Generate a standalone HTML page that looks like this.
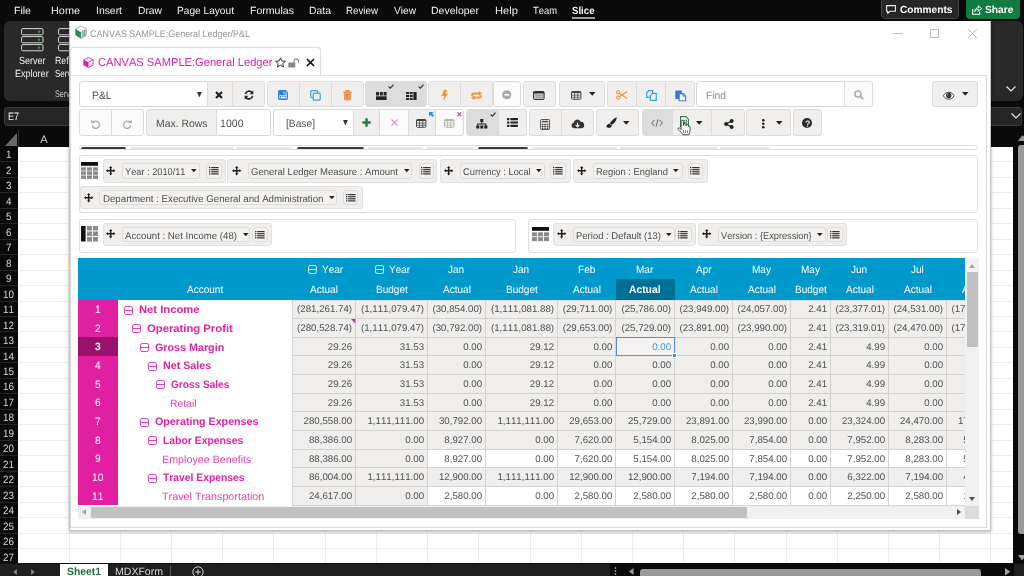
<!DOCTYPE html>
<html><head><meta charset="utf-8"><title>Slice - General Ledger P&amp;L</title>
<style>
html,body{margin:0;padding:0;}
body{width:1024px;height:576px;overflow:hidden;background:#0a0a0a;position:relative;font-family:"Liberation Sans",sans-serif;}
#root{position:absolute;left:0;top:0;width:1024px;height:576px;overflow:hidden;will-change:transform;filter:blur(0.35px);}
.b{position:absolute;box-sizing:border-box;}
.t{position:absolute;white-space:nowrap;font-family:"Liberation Sans",sans-serif;line-height:20px;transform-origin:0 50%;text-rendering:geometricPrecision;font-kerning:none;}
svg{overflow:visible;}
</style></head><body><div id="root">
<div class="b " style="left:18.00px;top:147.00px;width:995.00px;height:416.00px;background:#ffffff;"></div>
<div class="b " style="left:18.00px;top:161.00px;width:995.00px;height:1.00px;background:#ececec;"></div>
<div class="b " style="left:18.00px;top:177.00px;width:995.00px;height:1.00px;background:#ececec;"></div>
<div class="b " style="left:18.00px;top:192.00px;width:995.00px;height:1.00px;background:#ececec;"></div>
<div class="b " style="left:18.00px;top:208.00px;width:995.00px;height:1.00px;background:#ececec;"></div>
<div class="b " style="left:18.00px;top:223.00px;width:995.00px;height:1.00px;background:#ececec;"></div>
<div class="b " style="left:18.00px;top:239.00px;width:995.00px;height:1.00px;background:#ececec;"></div>
<div class="b " style="left:18.00px;top:254.00px;width:995.00px;height:1.00px;background:#ececec;"></div>
<div class="b " style="left:18.00px;top:270.00px;width:995.00px;height:1.00px;background:#ececec;"></div>
<div class="b " style="left:18.00px;top:285.00px;width:995.00px;height:1.00px;background:#ececec;"></div>
<div class="b " style="left:18.00px;top:301.00px;width:995.00px;height:1.00px;background:#ececec;"></div>
<div class="b " style="left:18.00px;top:316.00px;width:995.00px;height:1.00px;background:#ececec;"></div>
<div class="b " style="left:18.00px;top:331.00px;width:995.00px;height:1.00px;background:#ececec;"></div>
<div class="b " style="left:18.00px;top:347.00px;width:995.00px;height:1.00px;background:#ececec;"></div>
<div class="b " style="left:18.00px;top:362.00px;width:995.00px;height:1.00px;background:#ececec;"></div>
<div class="b " style="left:18.00px;top:378.00px;width:995.00px;height:1.00px;background:#ececec;"></div>
<div class="b " style="left:18.00px;top:393.00px;width:995.00px;height:1.00px;background:#ececec;"></div>
<div class="b " style="left:18.00px;top:409.00px;width:995.00px;height:1.00px;background:#ececec;"></div>
<div class="b " style="left:18.00px;top:424.00px;width:995.00px;height:1.00px;background:#ececec;"></div>
<div class="b " style="left:18.00px;top:440.00px;width:995.00px;height:1.00px;background:#ececec;"></div>
<div class="b " style="left:18.00px;top:455.00px;width:995.00px;height:1.00px;background:#ececec;"></div>
<div class="b " style="left:18.00px;top:471.00px;width:995.00px;height:1.00px;background:#ececec;"></div>
<div class="b " style="left:18.00px;top:486.00px;width:995.00px;height:1.00px;background:#ececec;"></div>
<div class="b " style="left:18.00px;top:502.00px;width:995.00px;height:1.00px;background:#ececec;"></div>
<div class="b " style="left:18.00px;top:517.00px;width:995.00px;height:1.00px;background:#ececec;"></div>
<div class="b " style="left:18.00px;top:533.00px;width:995.00px;height:1.00px;background:#ececec;"></div>
<div class="b " style="left:18.00px;top:548.00px;width:995.00px;height:1.00px;background:#ececec;"></div>
<div class="b " style="left:69.00px;top:147.00px;width:1.00px;height:416.00px;background:#ececec;"></div>
<div class="b " style="left:120.00px;top:147.00px;width:1.00px;height:416.00px;background:#ececec;"></div>
<div class="b " style="left:171.00px;top:147.00px;width:1.00px;height:416.00px;background:#ececec;"></div>
<div class="b " style="left:222.00px;top:147.00px;width:1.00px;height:416.00px;background:#ececec;"></div>
<div class="b " style="left:273.00px;top:147.00px;width:1.00px;height:416.00px;background:#ececec;"></div>
<div class="b " style="left:325.00px;top:147.00px;width:1.00px;height:416.00px;background:#ececec;"></div>
<div class="b " style="left:376.00px;top:147.00px;width:1.00px;height:416.00px;background:#ececec;"></div>
<div class="b " style="left:427.00px;top:147.00px;width:1.00px;height:416.00px;background:#ececec;"></div>
<div class="b " style="left:478.00px;top:147.00px;width:1.00px;height:416.00px;background:#ececec;"></div>
<div class="b " style="left:530.00px;top:147.00px;width:1.00px;height:416.00px;background:#ececec;"></div>
<div class="b " style="left:581.00px;top:147.00px;width:1.00px;height:416.00px;background:#ececec;"></div>
<div class="b " style="left:632.00px;top:147.00px;width:1.00px;height:416.00px;background:#ececec;"></div>
<div class="b " style="left:683.00px;top:147.00px;width:1.00px;height:416.00px;background:#ececec;"></div>
<div class="b " style="left:734.00px;top:147.00px;width:1.00px;height:416.00px;background:#ececec;"></div>
<div class="b " style="left:786.00px;top:147.00px;width:1.00px;height:416.00px;background:#ececec;"></div>
<div class="b " style="left:837.00px;top:147.00px;width:1.00px;height:416.00px;background:#ececec;"></div>
<div class="b " style="left:888.00px;top:147.00px;width:1.00px;height:416.00px;background:#ececec;"></div>
<div class="b " style="left:939.00px;top:147.00px;width:1.00px;height:416.00px;background:#ececec;"></div>
<div class="b " style="left:990.00px;top:147.00px;width:1.00px;height:416.00px;background:#ececec;"></div>
<div class="b " style="left:0.00px;top:128.00px;width:18.00px;height:435.00px;background:#0a0a0a;"></div>
<div class="b " style="left:0.00px;top:161.00px;width:18.00px;height:1.00px;background:#262626;"></div>
<div class="b " style="left:0.00px;top:177.00px;width:18.00px;height:1.00px;background:#262626;"></div>
<div class="b " style="left:0.00px;top:192.00px;width:18.00px;height:1.00px;background:#262626;"></div>
<div class="b " style="left:0.00px;top:208.00px;width:18.00px;height:1.00px;background:#262626;"></div>
<div class="b " style="left:0.00px;top:223.00px;width:18.00px;height:1.00px;background:#262626;"></div>
<div class="b " style="left:0.00px;top:239.00px;width:18.00px;height:1.00px;background:#262626;"></div>
<div class="b " style="left:0.00px;top:254.00px;width:18.00px;height:1.00px;background:#262626;"></div>
<div class="b " style="left:0.00px;top:270.00px;width:18.00px;height:1.00px;background:#262626;"></div>
<div class="b " style="left:0.00px;top:285.00px;width:18.00px;height:1.00px;background:#262626;"></div>
<div class="b " style="left:0.00px;top:301.00px;width:18.00px;height:1.00px;background:#262626;"></div>
<div class="b " style="left:0.00px;top:316.00px;width:18.00px;height:1.00px;background:#262626;"></div>
<div class="b " style="left:0.00px;top:331.00px;width:18.00px;height:1.00px;background:#262626;"></div>
<div class="b " style="left:0.00px;top:347.00px;width:18.00px;height:1.00px;background:#262626;"></div>
<div class="b " style="left:0.00px;top:362.00px;width:18.00px;height:1.00px;background:#262626;"></div>
<div class="b " style="left:0.00px;top:378.00px;width:18.00px;height:1.00px;background:#262626;"></div>
<div class="b " style="left:0.00px;top:393.00px;width:18.00px;height:1.00px;background:#262626;"></div>
<div class="b " style="left:0.00px;top:409.00px;width:18.00px;height:1.00px;background:#262626;"></div>
<div class="b " style="left:0.00px;top:424.00px;width:18.00px;height:1.00px;background:#262626;"></div>
<div class="b " style="left:0.00px;top:440.00px;width:18.00px;height:1.00px;background:#262626;"></div>
<div class="b " style="left:0.00px;top:455.00px;width:18.00px;height:1.00px;background:#262626;"></div>
<div class="b " style="left:0.00px;top:471.00px;width:18.00px;height:1.00px;background:#262626;"></div>
<div class="b " style="left:0.00px;top:486.00px;width:18.00px;height:1.00px;background:#262626;"></div>
<div class="b " style="left:0.00px;top:502.00px;width:18.00px;height:1.00px;background:#262626;"></div>
<div class="b " style="left:0.00px;top:517.00px;width:18.00px;height:1.00px;background:#262626;"></div>
<div class="b " style="left:0.00px;top:533.00px;width:18.00px;height:1.00px;background:#262626;"></div>
<div class="b " style="left:0.00px;top:548.00px;width:18.00px;height:1.00px;background:#262626;"></div>
<span class="t" style="left:5.56px;top:145px;font-size:10.6px;color:#d6d6d6;transform:scaleX(0.9300);">1</span>
<span class="t" style="left:5.56px;top:161px;font-size:10.6px;color:#d6d6d6;transform:scaleX(0.9300);">2</span>
<span class="t" style="left:5.56px;top:176px;font-size:10.6px;color:#d6d6d6;transform:scaleX(0.9300);">3</span>
<span class="t" style="left:5.56px;top:192px;font-size:10.6px;color:#d6d6d6;transform:scaleX(0.9300);">4</span>
<span class="t" style="left:5.56px;top:207px;font-size:10.6px;color:#d6d6d6;transform:scaleX(0.9300);">5</span>
<span class="t" style="left:5.56px;top:223px;font-size:10.6px;color:#d6d6d6;transform:scaleX(0.9300);">6</span>
<span class="t" style="left:5.56px;top:238px;font-size:10.6px;color:#d6d6d6;transform:scaleX(0.9300);">7</span>
<span class="t" style="left:5.56px;top:254px;font-size:10.6px;color:#d6d6d6;transform:scaleX(0.9300);">8</span>
<span class="t" style="left:5.56px;top:269px;font-size:10.6px;color:#d6d6d6;transform:scaleX(0.9300);">9</span>
<span class="t" style="left:2.82px;top:285px;font-size:10.6px;color:#d6d6d6;transform:scaleX(0.9300);">10</span>
<span class="t" style="left:2.82px;top:300px;font-size:10.6px;color:#d6d6d6;transform:scaleX(0.9300);">11</span>
<span class="t" style="left:2.82px;top:316px;font-size:10.6px;color:#d6d6d6;transform:scaleX(0.9300);">12</span>
<span class="t" style="left:2.82px;top:331px;font-size:10.6px;color:#d6d6d6;transform:scaleX(0.9300);">13</span>
<span class="t" style="left:2.82px;top:347px;font-size:10.6px;color:#d6d6d6;transform:scaleX(0.9300);">14</span>
<span class="t" style="left:2.82px;top:362px;font-size:10.6px;color:#d6d6d6;transform:scaleX(0.9300);">15</span>
<span class="t" style="left:2.82px;top:377px;font-size:10.6px;color:#d6d6d6;transform:scaleX(0.9300);">16</span>
<span class="t" style="left:2.82px;top:393px;font-size:10.6px;color:#d6d6d6;transform:scaleX(0.9300);">17</span>
<span class="t" style="left:2.82px;top:408px;font-size:10.6px;color:#d6d6d6;transform:scaleX(0.9300);">18</span>
<span class="t" style="left:2.82px;top:424px;font-size:10.6px;color:#d6d6d6;transform:scaleX(0.9300);">19</span>
<span class="t" style="left:2.82px;top:439px;font-size:10.6px;color:#d6d6d6;transform:scaleX(0.9300);">20</span>
<span class="t" style="left:2.82px;top:455px;font-size:10.6px;color:#d6d6d6;transform:scaleX(0.9300);">21</span>
<span class="t" style="left:2.82px;top:470px;font-size:10.6px;color:#d6d6d6;transform:scaleX(0.9300);">22</span>
<span class="t" style="left:2.82px;top:486px;font-size:10.6px;color:#d6d6d6;transform:scaleX(0.9300);">23</span>
<span class="t" style="left:2.82px;top:501px;font-size:10.6px;color:#d6d6d6;transform:scaleX(0.9300);">24</span>
<span class="t" style="left:2.82px;top:517px;font-size:10.6px;color:#d6d6d6;transform:scaleX(0.9300);">25</span>
<span class="t" style="left:2.82px;top:532px;font-size:10.6px;color:#d6d6d6;transform:scaleX(0.9300);">26</span>
<span class="t" style="left:2.82px;top:548px;font-size:10.6px;color:#d6d6d6;transform:scaleX(0.9300);">27</span>
<div class="b " style="left:0.00px;top:127.00px;width:1024.00px;height:20.00px;background:#0a0a0a;"></div>
<svg class="b" style="left:5.00px;top:133.00px;" width="12" height="13" viewBox="0 0 12 13"><path d="M12 0 L12 13 L0 13 Z" fill="#6a6a6a"/></svg>
<div class="b " style="left:18.00px;top:130.00px;width:1.00px;height:17.00px;background:#333;"></div>
<span class="t" style="left:40.33px;top:130px;font-size:11.0px;color:#d6d6d6;">A</span>
<div class="b " style="left:0.00px;top:0.00px;width:1024.00px;height:21.00px;background:#0a0a0a;"></div>
<span class="t" style="left:14.00px;top:2px;font-size:10.4px;color:#f2f2f2;transform:scaleX(1.0145);">File</span>
<span class="t" style="left:51.00px;top:2px;font-size:10.4px;color:#f2f2f2;transform:scaleX(1.0454);">Home</span>
<span class="t" style="left:96.00px;top:2px;font-size:10.4px;color:#f2f2f2;">Insert</span>
<span class="t" style="left:138.00px;top:2px;font-size:10.4px;color:#f2f2f2;transform:scaleX(0.9890);">Draw</span>
<span class="t" style="left:177.00px;top:2px;font-size:10.4px;color:#f2f2f2;transform:scaleX(0.9760);">Page Layout</span>
<span class="t" style="left:250.00px;top:2px;font-size:10.4px;color:#f2f2f2;transform:scaleX(1.0153);">Formulas</span>
<span class="t" style="left:309.00px;top:2px;font-size:10.4px;color:#f2f2f2;">Data</span>
<span class="t" style="left:346.00px;top:2px;font-size:10.4px;color:#f2f2f2;transform:scaleX(0.9384);">Review</span>
<span class="t" style="left:394.00px;top:2px;font-size:10.4px;color:#f2f2f2;transform:scaleX(0.9760);">View</span>
<span class="t" style="left:431.00px;top:2px;font-size:10.4px;color:#f2f2f2;transform:scaleX(1.0126);">Developer</span>
<span class="t" style="left:495.00px;top:2px;font-size:10.4px;color:#f2f2f2;transform:scaleX(1.0754);">Help</span>
<span class="t" style="left:533.00px;top:2px;font-size:10.4px;color:#f2f2f2;transform:scaleX(0.9029);">Team</span>
<span class="t" style="left:572.00px;top:2px;font-size:10.4px;color:#ffffff;font-weight:700;transform:scaleX(0.9266);">Slice</span>
<div class="b " style="left:572.00px;top:17.00px;width:22.50px;height:1.60px;background:#9a9a9a;"></div>
<div class="b " style="left:881.00px;top:-2.00px;width:78.00px;height:20.50px;background:#262626;border:1px solid #444;border-radius:4px;"></div>
<svg class="b" style="left:886.00px;top:4.50px;" width="10" height="9" viewBox="0 0 10 9"><path d="M0.6 0.6 H9.4 V6.2 H4 L1.8 8.4 V6.2 H0.6 Z" fill="none" stroke="#f0f0f0" stroke-width="1.1" stroke-linejoin="round"/></svg>
<span class="t" style="left:899.50px;top:1px;font-size:10.4px;color:#ffffff;font-weight:700;transform:scaleX(0.9769);">Comments</span>
<div class="b " style="left:966.00px;top:-2.00px;width:54.00px;height:20.50px;background:#107c41;border-radius:4px;"></div>
<svg class="b" style="left:972.00px;top:4.50px;" width="10" height="10" viewBox="0 0 10 10"><path d="M0.6 4 V9.2 H7.6 V6.6" fill="none" stroke="#fff" stroke-width="1.1"/><path d="M2.6 6.6 C2.8 4 4.4 2.8 6.4 2.8 V0.8 L9.6 3.6 L6.4 6.2 V4.4 C4.8 4.4 3.6 5 2.6 6.6 Z" fill="none" stroke="#fff" stroke-width="0.9" stroke-linejoin="round"/></svg>
<span class="t" style="left:985.00px;top:1px;font-size:10.4px;color:#ffffff;font-weight:700;transform:scaleX(0.9860);">Share</span>
<div class="b " style="left:4.00px;top:21.00px;width:1018.50px;height:79.50px;background:#292929;border-radius:6px;"></div>
<svg class="b" style="left:20.50px;top:28.00px;" width="23" height="24" viewBox="0 0 23 24"><rect x="0.6" y="0.6" width="21.4" height="6.2" rx="1.2" fill="none" stroke="#d8d8d8" stroke-width="1"/><path d="M17.2 2.2 l2.6 1.5 l-2.6 1.5 z" fill="#3fae5a"/><rect x="0.6" y="8.6" width="21.4" height="6.2" rx="1.2" fill="none" stroke="#d8d8d8" stroke-width="1"/><path d="M17.2 10.2 l2.6 1.5 l-2.6 1.5 z" fill="#3fae5a"/><rect x="0.6" y="16.6" width="21.4" height="6.2" rx="1.2" fill="none" stroke="#d8d8d8" stroke-width="1"/><path d="M17.2 18.2 l2.6 1.5 l-2.6 1.5 z" fill="#3fae5a"/></svg>
<svg class="b" style="left:57.50px;top:28.00px;" width="23" height="24" viewBox="0 0 23 24"><rect x="0.6" y="0.6" width="21.4" height="6.2" rx="1.2" fill="none" stroke="#d8d8d8" stroke-width="1"/><path d="M17.2 2.2 l2.6 1.5 l-2.6 1.5 z" fill="#3fae5a"/><rect x="0.6" y="8.6" width="21.4" height="6.2" rx="1.2" fill="none" stroke="#d8d8d8" stroke-width="1"/><path d="M17.2 10.2 l2.6 1.5 l-2.6 1.5 z" fill="#3fae5a"/><rect x="0.6" y="16.6" width="21.4" height="6.2" rx="1.2" fill="none" stroke="#d8d8d8" stroke-width="1"/><path d="M17.2 18.2 l2.6 1.5 l-2.6 1.5 z" fill="#3fae5a"/></svg>
<span class="t" style="left:18.98px;top:52px;font-size:10.4px;color:#f2f2f2;transform:scaleX(0.8700);">Server</span>
<span class="t" style="left:15.46px;top:65px;font-size:10.4px;color:#f2f2f2;transform:scaleX(0.8700);">Explorer</span>
<span class="t" style="left:54.50px;top:52px;font-size:10.4px;color:#f2f2f2;transform:scaleX(0.8455);">Refre</span>
<span class="t" style="left:55.00px;top:65px;font-size:10.4px;color:#f2f2f2;transform:scaleX(0.7730);">Serve</span>
<span class="t" style="left:54.80px;top:85px;font-size:9.6px;color:#c8c8c8;transform:scaleX(0.7498);">Server</span>
<svg class="b" style="left:1005.00px;top:85.00px;" width="12" height="8" viewBox="0 0 12 8"><path d="M1.5 1.5 L6 6 L10.5 1.5" fill="none" stroke="#e6e6e6" stroke-width="1.2"/></svg>
<div class="b " style="left:0.00px;top:100.50px;width:1024.00px;height:27.50px;background:#0a0a0a;"></div>
<div class="b " style="left:4.00px;top:107.00px;width:196.00px;height:19.00px;background:#262626;border:1px solid #3c3c3c;border-radius:3px;"></div>
<span class="t" style="left:8.00px;top:107px;font-size:10.8px;color:#f2f2f2;transform:scaleX(0.8327);">E7</span>
<div class="b " style="left:900.00px;top:107.00px;width:122.00px;height:19.00px;background:#262626;border:1px solid #3c3c3c;border-radius:3px;"></div>
<svg class="b" style="left:1010.00px;top:112.00px;" width="12" height="8" viewBox="0 0 12 8"><path d="M1.5 1.5 L6 6 L10.5 1.5" fill="none" stroke="#e6e6e6" stroke-width="1.2"/></svg>
<div class="b " style="left:1013.00px;top:128.00px;width:11.00px;height:435.00px;background:#0a0a0a;"></div>
<div class="b " style="left:1018.00px;top:145.00px;width:9.00px;height:389.00px;background:#999999;border-radius:3px;"></div>
<svg class="b" style="left:1017.50px;top:134.50px;" width="8" height="6" viewBox="0 0 8 6"><path d="M0 6 L4.5 0 L9 6 Z" fill="#9a9a9a"/></svg>
<svg class="b" style="left:1018.00px;top:555.00px;" width="8" height="5.5" viewBox="0 0 8 5.5"><path d="M0 0 L4 5.5 L8 0 Z" fill="#a0a0a0"/></svg>
<div class="b " style="left:0.00px;top:563.00px;width:1024.00px;height:13.00px;background:#1f1f1f;"></div>
<div class="b " style="left:0.00px;top:563.00px;width:1024.00px;height:1.00px;background:#111;"></div>
<svg class="b" style="left:13.30px;top:569.00px;" width="4" height="6" viewBox="0 0 4 6"><path d="M3.8 0 L0.2 3 L3.8 6 Z" fill="#8a8a8a"/></svg>
<svg class="b" style="left:30.80px;top:569.00px;" width="4" height="6" viewBox="0 0 4 6"><path d="M0.2 0 L3.8 3 L0.2 6 Z" fill="#8a8a8a"/></svg>
<div class="b " style="left:60.00px;top:564.00px;width:48.00px;height:12.00px;background:#ffffff;"></div>
<span class="t" style="left:66.50px;top:562px;font-size:10.6px;color:#1e7145;font-weight:700;transform:scaleX(0.9782);">Sheet1</span>
<span class="t" style="left:115.00px;top:562px;font-size:10.6px;color:#d6d6d6;transform:scaleX(0.9941);">MDXForm</span>
<div class="b " style="left:170.00px;top:565.50px;width:1.00px;height:10.50px;background:#555;"></div>
<svg class="b" style="left:192.00px;top:565.80px;" width="12" height="12" viewBox="0 0 12 12"><circle cx="6" cy="6" r="5.2" fill="none" stroke="#d0d0d0" stroke-width="1"/><path d="M3.2 6 H8.8 M6 3.2 V8.8" stroke="#d0d0d0" stroke-width="1.1"/></svg>
<div class="b " style="left:610.00px;top:563.40px;width:403.50px;height:12.60px;background:#0a0a0a;"></div>
<svg class="b" style="left:613.50px;top:567.00px;" width="3" height="9" viewBox="0 0 3 9"><circle cx="1.5" cy="1" r="0.8" fill="#ccc"/><circle cx="1.5" cy="4" r="0.8" fill="#ccc"/><circle cx="1.5" cy="7" r="0.8" fill="#ccc"/></svg>
<svg class="b" style="left:629.00px;top:567.50px;" width="5" height="7" viewBox="0 0 5 7"><path d="M4.5 0 L0 3.5 L4.5 7 Z" fill="#9a9a9a"/></svg>
<div class="b " style="left:639.50px;top:568.70px;width:341.50px;height:10.30px;background:#999999;border-radius:3px;"></div>
<svg class="b" style="left:1004.80px;top:568.20px;" width="5.4" height="7.6" viewBox="0 0 5.4 7.6"><path d="M0 0 L5.4 3.8 L0 7.6 Z" fill="#a0a0a0"/></svg>
<div class="b " style="left:1013.50px;top:564.60px;width:10.50px;height:11.40px;background:#1f1f1f;"></div>
<div class="b " style="left:68.60px;top:21.00px;width:922.70px;height:509.80px;background:#ffffff;box-shadow:0 1px 3px rgba(0,0,0,0.30);border:1px solid #c4c4c4;border-top:none;"></div>
<svg class="b" style="left:75.00px;top:25.40px;" width="12" height="13.6" viewBox="0 0 12 13.6"><path d="M0.5 4 L6 1 L11.5 4 V10 L6 13.5 L0.5 10 Z" fill="#fff" stroke="#8a9a90" stroke-width="0.7"/><path d="M0.5 4 L6 7.2 V13.5 L0.5 10 Z" fill="#2e8b57"/><path d="M6 7.2 L11.5 4 V10 L6 13.5 Z" fill="#e8efe9" stroke="#8a9a90" stroke-width="0.5"/><path d="M8 6 V12.2 M9.8 5 V11.2" stroke="#4a7a68" stroke-width="0.9"/></svg>
<span class="t" style="left:90.00px;top:25px;font-size:9.6px;color:#949494;transform:scaleX(0.9341);">CANVAS SAMPLE:General Ledger/P&amp;L</span>
<div class="b " style="left:893.00px;top:32.60px;width:9.50px;height:1.00px;background:#bcbcbc;"></div>
<div class="b " style="left:930.00px;top:28.50px;width:9.00px;height:9.00px;border:1px solid #bababa;"></div>
<svg class="b" style="left:968.00px;top:28.50px;" width="9" height="9" viewBox="0 0 9 9"><path d="M0.3 0.3 L8.7 8.7 M8.7 0.3 L0.3 8.7" stroke="#b4b4b4" stroke-width="1"/></svg>
<div class="b " style="left:70.00px;top:75.00px;width:917.00px;height:453.00px;background:#fff;border:1px solid #dcdcdc;"></div>
<div class="b " style="left:70.00px;top:47.00px;width:250.50px;height:29.00px;background:#fff;border:1px solid #dcdcdc;border-radius:3px 3px 0 0;border-bottom:none;"></div>
<svg class="b" style="left:83.00px;top:56.70px;" width="11" height="11" viewBox="0 0 11.5 12.5"><path d="M5.75 0.5 L11 3.2 V9.2 L5.75 12 L0.5 9.2 V3.2 Z" fill="none" stroke="#e01fa2" stroke-width="1"/><path d="M0.5 3.2 L5.75 6 V12 L0.5 9.2 Z" fill="#e01fa2"/><path d="M5.75 6 L11 3.2" stroke="#e01fa2" stroke-width="1"/></svg>
<span class="t" style="left:97.50px;top:53px;font-size:11.6px;color:#e01fa2;transform:scaleX(0.9598);">CANVAS SAMPLE:General Ledger</span>
<div class="b " style="left:71.00px;top:75.00px;width:249.00px;height:1.00px;background:#e6e6e6;"></div>
<svg class="b" style="left:275.00px;top:56.50px;" width="11" height="11" viewBox="0 0 11 11"><path d="M5.5 0.8 L6.9 4 L10.4 4.3 L7.7 6.6 L8.6 10 L5.5 8.1 L2.4 10 L3.3 6.6 L0.6 4.3 L4.1 4 Z" fill="none" stroke="#222" stroke-width="0.9" stroke-linejoin="round"/></svg>
<svg class="b" style="left:288.00px;top:57.50px;" width="12" height="10" viewBox="0 0 12 10"><rect x="0.3" y="4.6" width="7" height="5" rx="0.8" fill="#888"/><path d="M6 4.6 V3 a2.2 2.2 0 0 1 4.4 0 V4.4" fill="none" stroke="#888" stroke-width="1.2"/></svg>
<svg class="b" style="left:305.50px;top:57.50px;" width="9" height="9" viewBox="0 0 9 9"><path d="M1 1 L8 8 M8 1 L1 8" stroke="#111" stroke-width="1.7"/></svg>
<div class="b " style="left:79.00px;top:81.00px;width:129.00px;height:26.00px;background:#fff;border:1px solid #d6d6d6;border-radius:3px 0px 0px 3px;"></div>
<span class="t" style="left:91.50px;top:86px;font-size:10.8px;color:#505050;transform:scaleX(0.9601);">P&amp;L</span>
<svg class="b" style="left:196.60px;top:92.25px;" width="4.8" height="5.5" viewBox="0 0 4.8 5.5"><path d="M0 0 H4.8 L2.4 5.5 Z" fill="#333"/></svg>
<div class="b " style="left:207.00px;top:81.00px;width:26.00px;height:26.00px;background:#f0efee;border:1px solid #dddcdb;border-radius:0px 0px 0px 0px;"></div>
<svg class="b" style="left:215.30px;top:91.20px;" width="8" height="8" viewBox="0 0 8 8"><path d="M1 1 L7 7 M7 1 L1 7" stroke="#222" stroke-width="2.2"/></svg>
<div class="b " style="left:232.00px;top:81.00px;width:33.00px;height:26.00px;background:#f0efee;border:1px solid #dddcdb;border-radius:0px 3px 3px 0px;"></div>
<svg class="b" style="left:243.50px;top:90.00px;" width="10" height="10" viewBox="0 0 10 10"><path d="M1.3 4.2 A3.9 3.9 0 0 1 8 2.4" fill="none" stroke="#222" stroke-width="1.6"/><path d="M9.3 0.6 V4.3 H5.6 Z" fill="#222"/><path d="M8.7 5.8 A3.9 3.9 0 0 1 2 7.6" fill="none" stroke="#222" stroke-width="1.6"/><path d="M0.7 9.4 V5.7 H4.4 Z" fill="#222"/></svg>
<div class="b " style="left:267.00px;top:81.00px;width:33.00px;height:26.00px;background:#f0efee;border:1px solid #dddcdb;border-radius:3px 0px 0px 3px;"></div>
<svg class="b" style="left:278.00px;top:90.00px;" width="10" height="10" viewBox="0 0 10 10"><path d="M0.7 1.5 a0.8 0.8 0 0 1 0.8 -0.8 H7.4 L9.3 2.6 V8.5 a0.8 0.8 0 0 1 -0.8 0.8 H1.5 a0.8 0.8 0 0 1 -0.8 -0.8 Z" fill="none" stroke="#2b7de1" stroke-width="1.3"/><rect x="1.2" y="1" width="6.4" height="4.2" fill="#2b7de1"/><rect x="5.2" y="1.4" width="1.3" height="2.4" fill="#9cc6f5"/><rect x="2.6" y="6.4" width="4.8" height="2.2" fill="#fff" stroke="#2b7de1" stroke-width="0.6"/></svg>
<div class="b " style="left:299.00px;top:81.00px;width:33.00px;height:26.00px;background:#f0efee;border:1px solid #dddcdb;border-radius:0px 0px 0px 0px;"></div>
<svg class="b" style="left:309.50px;top:89.50px;" width="11" height="11" viewBox="0 0 11 11"><rect x="0.7" y="0.7" width="7" height="7" rx="1" fill="none" stroke="#38a3d8" stroke-width="1.2"/><rect x="3.2" y="3.2" width="7" height="7" rx="1" fill="#f0efee" stroke="#38a3d8" stroke-width="1.2"/></svg>
<div class="b " style="left:331.00px;top:81.00px;width:33.00px;height:26.00px;background:#f0efee;border:1px solid #dddcdb;border-radius:0px 3px 3px 0px;"></div>
<svg class="b" style="left:342.50px;top:89.75px;" width="9" height="10.5" viewBox="0 0 9 10.5"><path d="M0.3 2.1 H8.7 M3 1.8 V0.6 H6 V1.8" fill="none" stroke="#f0883c" stroke-width="1.1"/><path d="M1.2 2.6 H7.8 L7.3 10 H1.7 Z" fill="#f6a76b" stroke="#f0883c" stroke-width="0.8"/><path d="M3.2 4 V8.6 M4.5 4 V8.6 M5.8 4 V8.6" stroke="#e8733a" stroke-width="0.7"/></svg>
<div class="b " style="left:365.00px;top:81.00px;width:62.00px;height:26.00px;background:#dcdcdc;border-radius:3px;"></div>
<svg class="b" style="left:375.70px;top:91.90px;" width="10.6" height="8" viewBox="0 0 10.6 8"><rect x="0" y="0" width="3" height="3.5" fill="#2a2a2a"/><rect x="3.8" y="0" width="3" height="3.5" fill="#2a2a2a"/><rect x="7.6" y="0" width="3" height="3.5" fill="#2a2a2a"/><rect x="0" y="4.3" width="10.6" height="3.7" fill="#222"/></svg>
<svg class="b" style="left:388.00px;top:83.50px;" width="6" height="5" viewBox="0 0 6 5"><path d="M0.6 2.6 L2.3 4.2 L5.5 0.6" fill="none" stroke="#333" stroke-width="1.2"/></svg>
<svg class="b" style="left:405.80px;top:91.90px;" width="10.6" height="8" viewBox="0 0 10.6 8"><rect x="0" y="0" width="3" height="2.1" fill="#2a2a2a"/><rect x="3.7" y="0" width="3" height="2.1" fill="#2a2a2a"/><rect x="0" y="2.95" width="3" height="2.1" fill="#2a2a2a"/><rect x="3.7" y="2.95" width="3" height="2.1" fill="#2a2a2a"/><rect x="0" y="5.9" width="3" height="2.1" fill="#2a2a2a"/><rect x="3.7" y="5.9" width="3" height="2.1" fill="#2a2a2a"/><rect x="7.4" y="0" width="3.2" height="8" fill="#222"/></svg>
<svg class="b" style="left:418.00px;top:83.50px;" width="6" height="5" viewBox="0 0 6 5"><path d="M0.6 2.6 L2.3 4.2 L5.5 0.6" fill="none" stroke="#333" stroke-width="1.2"/></svg>
<div class="b " style="left:428.00px;top:81.00px;width:33.00px;height:26.00px;background:#f0efee;border:1px solid #dddcdb;border-radius:3px 0px 0px 3px;"></div>
<svg class="b" style="left:441.00px;top:89.50px;" width="7" height="11" viewBox="0 0 7 11"><path d="M3 0 H6.2 L4.6 3.8 H7 L2.2 11 L3.2 6 H0.4 Z" fill="#f0953a"/></svg>
<div class="b " style="left:460.00px;top:81.00px;width:33.00px;height:26.00px;background:#f0efee;border:1px solid #dddcdb;border-radius:0px 3px 3px 0px;"></div>
<svg class="b" style="left:470.00px;top:91.30px;" width="13" height="9" viewBox="0 0 13 9"><path d="M2.2 4.8 V3.6 a1.2 1.2 0 0 1 1.2 -1.2 H9.2" fill="none" stroke="#f0953a" stroke-width="2"/><path d="M8.6 0 L12.2 2.4 L8.6 4.8 Z" fill="#f0953a"/><path d="M10.8 4.2 V5.4 a1.2 1.2 0 0 1 -1.2 1.2 H3.8" fill="none" stroke="#f0953a" stroke-width="2"/><path d="M4.4 4.2 L0.8 6.6 L4.4 9 Z" fill="#f0953a"/></svg>
<div class="b " style="left:493.00px;top:81.00px;width:28.00px;height:26.00px;background:#fbfbfb;border:1px solid #d9d9d9;border-radius:3px 3px 3px 3px;"></div>
<svg class="b" style="left:502.25px;top:90.25px;" width="9.5" height="9.5" viewBox="0 0 9.5 9.5"><circle cx="4.75" cy="4.75" r="4.6" fill="#a9a9a9"/><rect x="2.3" y="4" width="4.9" height="1.6" fill="#fbfbfb"/></svg>
<div class="b " style="left:523.00px;top:81.00px;width:33.00px;height:26.00px;background:#f0efee;border:1px solid #dddcdb;border-radius:3px 3px 3px 3px;"></div>
<svg class="b" style="left:533.40px;top:90.80px;" width="11.6" height="9" viewBox="0 0 11.6 9"><rect x="0.5" y="0.5" width="10.6" height="8" rx="1" fill="#c4c4c4" stroke="#333" stroke-width="1"/><rect x="0.5" y="0.5" width="10.6" height="2" fill="#333"/><path d="M2.2 4.6 H9.4 M2.2 6.4 H9.4" stroke="#8a8a8a" stroke-width="0.7"/></svg>
<div class="b " style="left:559.00px;top:81.00px;width:46.00px;height:26.00px;background:#f0efee;border:1px solid #dddcdb;border-radius:3px 3px 3px 3px;"></div>
<svg class="b" style="left:570.60px;top:90.90px;" width="10.4" height="8.8" viewBox="0 0 10.4 8.8"><rect x="0.5" y="0.5" width="9.4" height="7.8" rx="1" fill="#fdfdfd" stroke="#444" stroke-width="1"/><rect x="0.5" y="0.5" width="9.4" height="1.6" fill="#444"/><path d="M0.5 4.1 H9.9 M0.5 6.2 H9.9 M3.56667 1.6 V8.3 M6.83333 1.6 V8.3" stroke="#444" stroke-width="0.8" fill="none"/></svg>
<svg class="b" style="left:588.75px;top:92.10px;" width="6.5" height="3.8" viewBox="0 0 6.5 3.8"><path d="M0 0 H6.5 L3.25 3.8 Z" fill="#222"/></svg>
<div class="b " style="left:607.00px;top:81.00px;width:30.00px;height:26.00px;background:#f0efee;border:1px solid #dddcdb;border-radius:3px 0px 0px 3px;"></div>
<svg class="b" style="left:616.00px;top:90.00px;" width="12" height="10" viewBox="0 0 12 10"><circle cx="2.2" cy="2.3" r="1.6" fill="none" stroke="#f0953a" stroke-width="1.1"/><circle cx="2.2" cy="7.7" r="1.6" fill="none" stroke="#f0953a" stroke-width="1.1"/><path d="M3.4 3.3 L11.2 8.6 M3.4 6.7 L11.2 1.4" stroke="#f0953a" stroke-width="1.2" fill="none"/></svg>
<div class="b " style="left:636.00px;top:81.00px;width:30.00px;height:26.00px;background:#f0efee;border:1px solid #dddcdb;border-radius:0px 0px 0px 0px;"></div>
<svg class="b" style="left:645.50px;top:89.50px;" width="11" height="11" viewBox="0 0 11 11"><path d="M0.7 3 L2.8 0.7 H6.6 V7.4 H0.7 Z" fill="none" stroke="#38a3d8" stroke-width="1.2"/><path d="M4.3 5.6 L6.4 3.4 H10.3 V10.3 H4.3 Z" fill="#f0efee" stroke="#38a3d8" stroke-width="1.2"/></svg>
<div class="b " style="left:665.00px;top:81.00px;width:30.00px;height:26.00px;background:#f0efee;border:1px solid #dddcdb;border-radius:0px 3px 3px 0px;"></div>
<svg class="b" style="left:674.50px;top:89.50px;" width="11" height="11" viewBox="0 0 11 11"><rect x="0.3" y="0.6" width="6.6" height="8.4" rx="0.8" fill="#2b7de1"/><path d="M4.2 3.6 H8.2 L10.6 6 V10.7 H4.2 Z" fill="#fff" stroke="#2b7de1" stroke-width="1.1"/><path d="M8 3.6 V6.2 H10.6" fill="none" stroke="#2b7de1" stroke-width="0.9"/></svg>
<div class="b " style="left:696.00px;top:81.00px;width:149.00px;height:26.00px;background:#fff;border:1px solid #d6d6d6;border-radius:3px 0px 0px 3px;"></div>
<span class="t" style="left:706.00px;top:86px;font-size:10.6px;color:#8a8a8a;transform:scaleX(0.9700);">Find</span>
<div class="b " style="left:844.00px;top:81.00px;width:29.00px;height:26.00px;background:#fbfbfb;border:1px solid #dcdcdc;border-radius:0px 3px 3px 0px;"></div>
<svg class="b" style="left:853.50px;top:90.30px;" width="10" height="10" viewBox="0 0 10 10"><circle cx="4" cy="4" r="3.1" fill="none" stroke="#aaa" stroke-width="1.5"/><path d="M6.3 6.3 L9.3 9.3" stroke="#aaa" stroke-width="1.8"/></svg>
<div class="b " style="left:932.00px;top:81.00px;width:46.00px;height:26.00px;background:#f0efee;border:1px solid #dddcdb;border-radius:3px 3px 3px 3px;"></div>
<svg class="b" style="left:942.75px;top:92.25px;" width="11.5" height="7.5" viewBox="0 0 11.5 7.5"><path d="M0.4 3.75 C2 0.9 3.8 0.3 5.75 0.3 C7.7 0.3 9.5 0.9 11.1 3.75 C9.5 6.6 7.7 7.2 5.75 7.2 C3.8 7.2 2 6.6 0.4 3.75 Z" fill="#fff" stroke="#333" stroke-width="0.9"/><circle cx="5.75" cy="3.5" r="2.7" fill="#333"/><circle cx="4.8" cy="2.6" r="0.9" fill="#777"/></svg>
<svg class="b" style="left:961.75px;top:91.60px;" width="6.5" height="3.8" viewBox="0 0 6.5 3.8"><path d="M0 0 H6.5 L3.25 3.8 Z" fill="#222"/></svg>
<div class="b " style="left:79.00px;top:109.00px;width:33.00px;height:27.00px;background:#fbfbfb;border:1px solid #dcdcdc;border-radius:3px 0px 0px 3px;"></div>
<svg class="b" style="left:90.50px;top:118.55px;" width="9" height="9.5" viewBox="0 0 9 9.5"><path d="M2 3.4 A3.6 3.6 0 1 1 1.2 6.4" fill="none" stroke="#a8a8a8" stroke-width="1.3"/><path d="M0.3 0.6 V4.2 H3.9 Z" fill="#a8a8a8"/></svg>
<div class="b " style="left:111.00px;top:109.00px;width:33.00px;height:27.00px;background:#fbfbfb;border:1px solid #dcdcdc;border-radius:0px 3px 3px 0px;"></div>
<svg class="b" style="left:123.00px;top:118.55px;" width="9" height="9.5" viewBox="0 0 9 9.5"><path d="M7 3.4 A3.6 3.6 0 1 0 7.8 6.4" fill="none" stroke="#a8a8a8" stroke-width="1.3"/><path d="M8.7 0.6 V4.2 H5.1 Z" fill="#a8a8a8"/></svg>
<div class="b " style="left:146.00px;top:109.00px;width:71.00px;height:27.00px;background:#f0efee;border:1px solid #dddcdb;border-radius:3px 0px 0px 3px;"></div>
<span class="t" style="left:155.50px;top:114px;font-size:10.6px;color:#505050;transform:scaleX(0.9825);">Max. Rows</span>
<div class="b " style="left:216.00px;top:109.00px;width:55.00px;height:27.00px;background:#fff;border:1px solid #d6d6d6;border-radius:0px 3px 3px 0px;"></div>
<span class="t" style="left:220.00px;top:114px;font-size:10.6px;color:#505050;">1000</span>
<div class="b " style="left:273.00px;top:109.00px;width:81.00px;height:27.00px;background:#fff;border:1px solid #d6d6d6;border-radius:3px 0px 0px 3px;"></div>
<span class="t" style="left:285.50px;top:114px;font-size:10.6px;color:#505050;transform:scaleX(0.9651);">[Base]</span>
<svg class="b" style="left:343.10px;top:120.05px;" width="4.8" height="5.5" viewBox="0 0 4.8 5.5"><path d="M0 0 H4.8 L2.4 5.5 Z" fill="#333"/></svg>
<div class="b " style="left:353.00px;top:109.00px;width:27.00px;height:27.00px;background:#f0efee;border:1px solid #dddcdb;border-radius:0px 0px 0px 0px;"></div>
<svg class="b" style="left:362.00px;top:118.30px;" width="9" height="9" viewBox="0 0 9 9"><path d="M4.5 0.3 V8.7 M0.3 4.5 H8.7" stroke="#1f7a3e" stroke-width="2.4"/></svg>
<div class="b " style="left:379.00px;top:109.00px;width:30.00px;height:27.00px;background:#fbfbfb;border:1px solid #d9d9d9;border-radius:0px 0px 0px 0px;"></div>
<svg class="b" style="left:390.50px;top:119.30px;" width="7" height="7" viewBox="0 0 7 7"><path d="M0.5 0.5 L6.5 6.5 M6.5 0.5 L0.5 6.5" stroke="#eb8ed0" stroke-width="1.1"/></svg>
<div class="b " style="left:408.00px;top:109.00px;width:28.00px;height:27.00px;background:#f0efee;border:1px solid #dddcdb;border-radius:0px 0px 0px 0px;"></div>
<svg class="b" style="left:416.40px;top:118.80px;" width="10.4" height="8.8" viewBox="0 0 10.4 8.8"><rect x="0.5" y="0.5" width="9.4" height="7.8" rx="1" fill="#fdfdfd" stroke="#444" stroke-width="1"/><rect x="0.5" y="0.5" width="9.4" height="1.6" fill="#444"/><path d="M0.5 4.1 H9.9 M0.5 6.2 H9.9 M3.56667 1.6 V8.3 M6.83333 1.6 V8.3" stroke="#444" stroke-width="0.8" fill="none"/></svg>
<svg class="b" style="left:429.00px;top:112.00px;" width="5" height="5" viewBox="0 0 5 5"><path d="M0 0 H4.6 L3.1 1.5 L5 3.4 L3.4 5 L1.5 3.1 L0 4.6 Z" fill="#2b8be8"/></svg>
<div class="b " style="left:435.00px;top:109.00px;width:29.00px;height:27.00px;background:#fbfbfb;border:1px solid #d9d9d9;border-radius:0px 3px 3px 0px;"></div>
<svg class="b" style="left:444.40px;top:118.80px;" width="10.4" height="8.8" viewBox="0 0 10.4 8.8"><rect x="0.5" y="0.5" width="9.4" height="7.8" rx="1" fill="#fdfdfd" stroke="#b4b4b4" stroke-width="1"/><rect x="0.5" y="0.5" width="9.4" height="1.6" fill="#b4b4b4"/><path d="M0.5 4.1 H9.9 M0.5 6.2 H9.9 M3.56667 1.6 V8.3 M6.83333 1.6 V8.3" stroke="#b4b4b4" stroke-width="0.8" fill="none"/></svg>
<svg class="b" style="left:456.70px;top:112.20px;" width="4.6" height="4.6" viewBox="0 0 4.6 4.6"><path d="M0.4 0.4 L4.2 4.2 M4.2 0.4 L0.4 4.2" stroke="#e0399f" stroke-width="1.2"/></svg>
<div class="b " style="left:466.00px;top:109.00px;width:33.00px;height:27.00px;background:#dcdcdc;border-radius:3px 0 0 3px;"></div>
<svg class="b" style="left:476.20px;top:119.40px;" width="11.6" height="9.6" viewBox="0 0 11 9.5"><rect x="4" y="0" width="3" height="3" fill="#222"/><path d="M5.5 3 V5 M1.5 6.6 V5 H9.5 V6.6" fill="none" stroke="#222" stroke-width="1"/><rect x="0" y="6.4" width="3" height="3" fill="#222"/><rect x="4" y="6.4" width="3" height="3" fill="#222"/><rect x="8" y="6.4" width="3" height="3" fill="#222"/></svg>
<svg class="b" style="left:489.50px;top:112.00px;" width="6" height="5" viewBox="0 0 6 5"><path d="M0.6 2.6 L2.3 4.2 L5.5 0.6" fill="none" stroke="#333" stroke-width="1.2"/></svg>
<div class="b " style="left:498.00px;top:109.00px;width:29.00px;height:27.00px;background:#f0efee;border:1px solid #dddcdb;border-radius:0px 3px 3px 0px;"></div>
<svg class="b" style="left:507.10px;top:118.00px;" width="11" height="9" viewBox="0 0 11 9"><rect x="0" y="0" width="2.4" height="2.2" rx="0.4" fill="#222"/><rect x="3.4" y="0" width="7.6" height="2.2" rx="0.4" fill="#222"/><rect x="0" y="3.4" width="2.4" height="2.2" rx="0.4" fill="#222"/><rect x="3.4" y="3.4" width="7.6" height="2.2" rx="0.4" fill="#222"/><rect x="0" y="6.8" width="2.4" height="2.2" rx="0.4" fill="#222"/><rect x="3.4" y="6.8" width="7.6" height="2.2" rx="0.4" fill="#222"/></svg>
<div class="b " style="left:529.00px;top:109.00px;width:33.00px;height:27.00px;background:#f0efee;border:1px solid #dddcdb;border-radius:3px 0px 0px 3px;"></div>
<svg class="b" style="left:539.80px;top:118.70px;" width="10.2" height="11" viewBox="0 0 10 11"><rect x="0.5" y="0.5" width="9" height="10" rx="0.8" fill="none" stroke="#444" stroke-width="0.9"/><rect x="1.8" y="1.8" width="6.4" height="1.6" fill="#555"/><rect x="1.8" y="4.8" width="1.5" height="1.3" fill="#333"/><rect x="4.25" y="4.8" width="1.5" height="1.3" fill="#333"/><rect x="6.7" y="4.8" width="1.5" height="1.3" fill="#333"/><rect x="1.8" y="6.7" width="1.5" height="1.3" fill="#333"/><rect x="4.25" y="6.7" width="1.5" height="1.3" fill="#333"/><rect x="6.7" y="6.7" width="1.5" height="1.3" fill="#333"/><rect x="1.8" y="8.6" width="1.5" height="1.3" fill="#333"/><rect x="4.25" y="8.6" width="1.5" height="1.3" fill="#333"/><rect x="6.7" y="8.6" width="1.5" height="1.3" fill="#333"/></svg>
<div class="b " style="left:561.00px;top:109.00px;width:33.00px;height:27.00px;background:#f0efee;border:1px solid #dddcdb;border-radius:0px 3px 3px 0px;"></div>
<svg class="b" style="left:571.00px;top:118.55px;" width="13" height="9.5" viewBox="0 0 13 9.5"><path d="M3 9.3 a2.8 2.8 0 0 1 -0.4 -5.5 a3.6 3.6 0 0 1 6.9 -1 a3.2 3.2 0 0 1 0.8 6.5 Z" fill="#333"/><path d="M6.5 3.6 V7.6 M4.6 5.9 L6.5 7.9 L8.4 5.9" fill="none" stroke="#f0efee" stroke-width="1.2"/></svg>
<div class="b " style="left:596.00px;top:109.00px;width:43.00px;height:27.00px;background:#f0efee;border:1px solid #dddcdb;border-radius:3px 3px 3px 3px;"></div>
<svg class="b" style="left:605.60px;top:117.40px;" width="11.2" height="11.2" viewBox="0 0 10.5 10.5"><path d="M10.2 0.2 C7.6 1.2 5 3.6 3.6 5.8 L5.4 7.6 C7.8 6 10 3 10.2 0.2 Z" fill="#222"/><path d="M3.2 6.3 C1.2 6 1.4 8.2 0 8.8 C1.8 10.8 5.4 10.4 5.4 7.9 Z" fill="#222"/></svg>
<svg class="b" style="left:622.75px;top:121.10px;" width="6.5" height="3.8" viewBox="0 0 6.5 3.8"><path d="M0 0 H6.5 L3.25 3.8 Z" fill="#222"/></svg>
<div class="b " style="left:642.00px;top:109.00px;width:30.00px;height:27.00px;background:#dcdcdc;border-radius:3px 0 0 3px;"></div>
<svg class="b" style="left:651.00px;top:119.30px;" width="12" height="8" viewBox="0 0 12 8"><path d="M3.4 1 L0.7 4 L3.4 7 M8.6 1 L11.3 4 L8.6 7 M6.9 0.4 L5.1 7.6" fill="none" stroke="#666" stroke-width="1"/></svg>
<div class="b " style="left:672.00px;top:109.00px;width:40.00px;height:27.00px;background:#f0efee;border:1px solid #dddcdb;border-radius:0px 0px 0px 0px;"></div>
<svg class="b" style="left:680.00px;top:116.00px;" width="9" height="11" viewBox="0 0 9 11"><path d="M0.6 0.6 H5.8 L8.4 3.2 V10.4 H0.6 Z" fill="#fff" stroke="#2e7d4f" stroke-width="1.1"/><path d="M2.2 4.2 H6.6 V8.6 H2.2 Z M2.2 6.4 H6.6 M4.4 4.2 V8.6" fill="none" stroke="#2e7d4f" stroke-width="0.8"/></svg>
<svg class="b" style="left:696.25px;top:121.10px;" width="6.5" height="3.8" viewBox="0 0 6.5 3.8"><path d="M0 0 H6.5 L3.25 3.8 Z" fill="#222"/></svg>
<div class="b " style="left:711.00px;top:109.00px;width:34.00px;height:27.00px;background:#f0efee;border:1px solid #dddcdb;border-radius:0px 3px 3px 0px;"></div>
<svg class="b" style="left:723.50px;top:119.40px;" width="9.8" height="10" viewBox="0 0 9.5 10"><circle cx="7.5" cy="2" r="2" fill="#222"/><circle cx="7.5" cy="8" r="2" fill="#222"/><circle cx="2" cy="5" r="2" fill="#222"/><path d="M7.5 2 L2 5 L7.5 8" fill="none" stroke="#222" stroke-width="1.4"/></svg>
<div class="b " style="left:746.00px;top:109.00px;width:45.00px;height:27.00px;background:#f0efee;border:1px solid #dddcdb;border-radius:3px 3px 3px 3px;"></div>
<svg class="b" style="left:761.50px;top:119.30px;" width="2.6" height="9.6" viewBox="0 0 2.6 9.6"><circle cx="1.3" cy="1.3" r="1.3" fill="#222"/><circle cx="1.3" cy="4.8" r="1.3" fill="#222"/><circle cx="1.3" cy="8.3" r="1.3" fill="#222"/></svg>
<svg class="b" style="left:775.75px;top:121.10px;" width="6.5" height="3.8" viewBox="0 0 6.5 3.8"><path d="M0 0 H6.5 L3.25 3.8 Z" fill="#222"/></svg>
<div class="b " style="left:793.00px;top:109.00px;width:29.00px;height:27.00px;background:#f0efee;border:1px solid #dddcdb;border-radius:3px 3px 3px 3px;"></div>
<div class="b " style="left:802.40px;top:118.10px;width:10.00px;height:10.00px;background:#2a2a2a;border-radius:5px;"></div>
<span class="t" style="left:804.70px;top:114px;font-size:9.4px;color:#f0efee;font-weight:700;transform:scaleX(0.9405);">?</span>
<div class="b " style="left:79.00px;top:144.50px;width:898.50px;height:5.00px;background:#fff;border:1px solid #e0e0e0;border-radius:3px;"></div>
<div class="b " style="left:81.00px;top:146.80px;width:45.00px;height:2.50px;background:#3a3a3a;border-radius:2px 2px 0 0;"></div>
<div class="b " style="left:296.50px;top:146.80px;width:67.00px;height:2.50px;background:#3a3a3a;border-radius:2px 2px 0 0;"></div>
<div class="b " style="left:478.00px;top:146.80px;width:50.00px;height:2.50px;background:#3a3a3a;border-radius:2px 2px 0 0;"></div>
<div class="b " style="left:130.00px;top:146.80px;width:104.00px;height:2.50px;background:#e6e6e6;border-radius:2px 2px 0 0;"></div>
<div class="b " style="left:236.00px;top:146.80px;width:56.00px;height:2.50px;background:#e6e6e6;border-radius:2px 2px 0 0;"></div>
<div class="b " style="left:368.00px;top:146.80px;width:55.00px;height:2.50px;background:#e6e6e6;border-radius:2px 2px 0 0;"></div>
<div class="b " style="left:426.00px;top:146.80px;width:48.00px;height:2.50px;background:#e6e6e6;border-radius:2px 2px 0 0;"></div>
<div class="b " style="left:532.00px;top:146.80px;width:85.00px;height:2.50px;background:#e6e6e6;border-radius:2px 2px 0 0;"></div>
<div class="b " style="left:620.00px;top:146.80px;width:98.00px;height:2.50px;background:#e6e6e6;border-radius:2px 2px 0 0;"></div>
<div class="b " style="left:720.00px;top:146.80px;width:50.00px;height:2.50px;background:#e6e6e6;border-radius:2px 2px 0 0;"></div>
<div class="b " style="left:79.00px;top:155.00px;width:899.00px;height:58.00px;background:#fff;border:1px solid #dedede;border-radius:3px;"></div>
<svg class="b" style="left:81.00px;top:162.00px;" width="17" height="17" viewBox="0 0 17 17"><rect x="0" y="0" width="17" height="3.8" fill="#111"/><rect x="0" y="5.3" width="5" height="3.4" fill="#8a8a8a"/><rect x="6" y="5.3" width="5" height="3.4" fill="#8a8a8a"/><rect x="12" y="5.3" width="5" height="3.4" fill="#8a8a8a"/><rect x="0" y="9.4" width="5" height="3.4" fill="#8a8a8a"/><rect x="6" y="9.4" width="5" height="3.4" fill="#8a8a8a"/><rect x="12" y="9.4" width="5" height="3.4" fill="#8a8a8a"/><rect x="0" y="13.5" width="5" height="3.4" fill="#8a8a8a"/><rect x="6" y="13.5" width="5" height="3.4" fill="#8a8a8a"/><rect x="12" y="13.5" width="5" height="3.4" fill="#8a8a8a"/></svg>
<div class="b " style="left:102.50px;top:159.00px;width:123.00px;height:23.50px;background:#f0efee;border:1px solid #e2e1e0;border-radius:3px;"></div>
<svg class="b" style="left:106.30px;top:165.90px;" width="9.4" height="9.4" viewBox="0 0 9 9"><path d="M4.5 1.4 V7.6 M1.4 4.5 H7.6" stroke="#222" stroke-width="1.5"/><path d="M4.5 0 L6.1 1.9 H2.9 Z M4.5 9 L6.1 7.1 H2.9 Z M0 4.5 L1.9 2.9 V6.1 Z M9 4.5 L7.1 2.9 V6.1 Z" fill="#222"/></svg>
<div class="b " style="left:121.70px;top:163.30px;width:78.30px;height:15.40px;background:#f3f2f1;border:1px solid #dddcdb;border-radius:3px;"></div>
<span class="t" style="left:125.00px;top:163px;font-size:9.8px;color:#4e4e4e;transform:scaleX(0.9411);">Year : 2010/11</span>
<svg class="b" style="left:190.90px;top:169.40px;" width="5.6" height="3.2" viewBox="0 0 5.6 3.2"><path d="M0 0 H5.6 L2.8 3.2 Z" fill="#222"/></svg>
<div class="b " style="left:205.50px;top:163.30px;width:16.00px;height:15.40px;background:#f3f2f1;border:1px solid #dddcdb;border-radius:3px;"></div>
<svg class="b" style="left:208.70px;top:167.20px;" width="9.6" height="7.6" viewBox="0 0 9.6 7.6"><rect x="0" y="0" width="1.4" height="1.2" fill="#333"/><rect x="2.2" y="0" width="7.4" height="1.2" fill="#333"/><rect x="0" y="2.1" width="1.4" height="1.2" fill="#333"/><rect x="2.2" y="2.1" width="7.4" height="1.2" fill="#333"/><rect x="0" y="4.2" width="1.4" height="1.2" fill="#333"/><rect x="2.2" y="4.2" width="7.4" height="1.2" fill="#333"/><rect x="0" y="6.3" width="1.4" height="1.2" fill="#333"/><rect x="2.2" y="6.3" width="7.4" height="1.2" fill="#333"/></svg>
<div class="b " style="left:227.00px;top:159.00px;width:210.00px;height:23.50px;background:#f0efee;border:1px solid #e2e1e0;border-radius:3px;"></div>
<svg class="b" style="left:232.30px;top:165.90px;" width="9.4" height="9.4" viewBox="0 0 9 9"><path d="M4.5 1.4 V7.6 M1.4 4.5 H7.6" stroke="#222" stroke-width="1.5"/><path d="M4.5 0 L6.1 1.9 H2.9 Z M4.5 9 L6.1 7.1 H2.9 Z M0 4.5 L1.9 2.9 V6.1 Z M9 4.5 L7.1 2.9 V6.1 Z" fill="#222"/></svg>
<div class="b " style="left:247.50px;top:163.30px;width:164.50px;height:15.40px;background:#f3f2f1;border:1px solid #dddcdb;border-radius:3px;"></div>
<span class="t" style="left:251.00px;top:163px;font-size:9.8px;color:#4e4e4e;transform:scaleX(0.9743);">General Ledger Measure : Amount</span>
<svg class="b" style="left:403.70px;top:169.40px;" width="5.6" height="3.2" viewBox="0 0 5.6 3.2"><path d="M0 0 H5.6 L2.8 3.2 Z" fill="#222"/></svg>
<div class="b " style="left:418.50px;top:163.30px;width:15.50px;height:15.40px;background:#f3f2f1;border:1px solid #dddcdb;border-radius:3px;"></div>
<svg class="b" style="left:421.45px;top:167.20px;" width="9.6" height="7.6" viewBox="0 0 9.6 7.6"><rect x="0" y="0" width="1.4" height="1.2" fill="#333"/><rect x="2.2" y="0" width="7.4" height="1.2" fill="#333"/><rect x="0" y="2.1" width="1.4" height="1.2" fill="#333"/><rect x="2.2" y="2.1" width="7.4" height="1.2" fill="#333"/><rect x="0" y="4.2" width="1.4" height="1.2" fill="#333"/><rect x="2.2" y="4.2" width="7.4" height="1.2" fill="#333"/><rect x="0" y="6.3" width="1.4" height="1.2" fill="#333"/><rect x="2.2" y="6.3" width="7.4" height="1.2" fill="#333"/></svg>
<div class="b " style="left:439.70px;top:159.00px;width:131.00px;height:23.50px;background:#f0efee;border:1px solid #e2e1e0;border-radius:3px;"></div>
<svg class="b" style="left:444.30px;top:165.90px;" width="9.4" height="9.4" viewBox="0 0 9 9"><path d="M4.5 1.4 V7.6 M1.4 4.5 H7.6" stroke="#222" stroke-width="1.5"/><path d="M4.5 0 L6.1 1.9 H2.9 Z M4.5 9 L6.1 7.1 H2.9 Z M0 4.5 L1.9 2.9 V6.1 Z M9 4.5 L7.1 2.9 V6.1 Z" fill="#222"/></svg>
<div class="b " style="left:459.70px;top:163.30px;width:85.30px;height:15.40px;background:#f3f2f1;border:1px solid #dddcdb;border-radius:3px;"></div>
<span class="t" style="left:463.00px;top:163px;font-size:9.8px;color:#4e4e4e;transform:scaleX(0.9489);">Currency : Local</span>
<svg class="b" style="left:536.20px;top:169.40px;" width="5.6" height="3.2" viewBox="0 0 5.6 3.2"><path d="M0 0 H5.6 L2.8 3.2 Z" fill="#222"/></svg>
<div class="b " style="left:550.00px;top:163.30px;width:16.00px;height:15.40px;background:#f3f2f1;border:1px solid #dddcdb;border-radius:3px;"></div>
<svg class="b" style="left:553.20px;top:167.20px;" width="9.6" height="7.6" viewBox="0 0 9.6 7.6"><rect x="0" y="0" width="1.4" height="1.2" fill="#333"/><rect x="2.2" y="0" width="7.4" height="1.2" fill="#333"/><rect x="0" y="2.1" width="1.4" height="1.2" fill="#333"/><rect x="2.2" y="2.1" width="7.4" height="1.2" fill="#333"/><rect x="0" y="4.2" width="1.4" height="1.2" fill="#333"/><rect x="2.2" y="4.2" width="7.4" height="1.2" fill="#333"/><rect x="0" y="6.3" width="1.4" height="1.2" fill="#333"/><rect x="2.2" y="6.3" width="7.4" height="1.2" fill="#333"/></svg>
<div class="b " style="left:572.50px;top:159.00px;width:135.00px;height:23.50px;background:#f0efee;border:1px solid #e2e1e0;border-radius:3px;"></div>
<svg class="b" style="left:577.30px;top:165.90px;" width="9.4" height="9.4" viewBox="0 0 9 9"><path d="M4.5 1.4 V7.6 M1.4 4.5 H7.6" stroke="#222" stroke-width="1.5"/><path d="M4.5 0 L6.1 1.9 H2.9 Z M4.5 9 L6.1 7.1 H2.9 Z M0 4.5 L1.9 2.9 V6.1 Z M9 4.5 L7.1 2.9 V6.1 Z" fill="#222"/></svg>
<div class="b " style="left:592.50px;top:163.30px;width:90.00px;height:15.40px;background:#f3f2f1;border:1px solid #dddcdb;border-radius:3px;"></div>
<span class="t" style="left:595.50px;top:163px;font-size:9.8px;color:#4e4e4e;transform:scaleX(0.9576);">Region : England</span>
<svg class="b" style="left:673.20px;top:169.40px;" width="5.6" height="3.2" viewBox="0 0 5.6 3.2"><path d="M0 0 H5.6 L2.8 3.2 Z" fill="#222"/></svg>
<div class="b " style="left:687.50px;top:163.30px;width:15.50px;height:15.40px;background:#f3f2f1;border:1px solid #dddcdb;border-radius:3px;"></div>
<svg class="b" style="left:690.45px;top:167.20px;" width="9.6" height="7.6" viewBox="0 0 9.6 7.6"><rect x="0" y="0" width="1.4" height="1.2" fill="#333"/><rect x="2.2" y="0" width="7.4" height="1.2" fill="#333"/><rect x="0" y="2.1" width="1.4" height="1.2" fill="#333"/><rect x="2.2" y="2.1" width="7.4" height="1.2" fill="#333"/><rect x="0" y="4.2" width="1.4" height="1.2" fill="#333"/><rect x="2.2" y="4.2" width="7.4" height="1.2" fill="#333"/><rect x="0" y="6.3" width="1.4" height="1.2" fill="#333"/><rect x="2.2" y="6.3" width="7.4" height="1.2" fill="#333"/></svg>
<div class="b " style="left:79.50px;top:185.70px;width:283.20px;height:23.50px;background:#f0efee;border:1px solid #e2e1e0;border-radius:3px;"></div>
<svg class="b" style="left:84.30px;top:192.60px;" width="9.4" height="9.4" viewBox="0 0 9 9"><path d="M4.5 1.4 V7.6 M1.4 4.5 H7.6" stroke="#222" stroke-width="1.5"/><path d="M4.5 0 L6.1 1.9 H2.9 Z M4.5 9 L6.1 7.1 H2.9 Z M0 4.5 L1.9 2.9 V6.1 Z M9 4.5 L7.1 2.9 V6.1 Z" fill="#222"/></svg>
<div class="b " style="left:99.00px;top:190.00px;width:238.00px;height:15.40px;background:#f3f2f1;border:1px solid #dddcdb;border-radius:3px;"></div>
<span class="t" style="left:102.50px;top:190px;font-size:9.8px;color:#4e4e4e;transform:scaleX(0.9874);">Department : Executive General and Administration</span>
<svg class="b" style="left:328.70px;top:196.10px;" width="5.6" height="3.2" viewBox="0 0 5.6 3.2"><path d="M0 0 H5.6 L2.8 3.2 Z" fill="#222"/></svg>
<div class="b " style="left:342.70px;top:190.00px;width:15.80px;height:15.40px;background:#f3f2f1;border:1px solid #dddcdb;border-radius:3px;"></div>
<svg class="b" style="left:345.80px;top:193.90px;" width="9.6" height="7.6" viewBox="0 0 9.6 7.6"><rect x="0" y="0" width="1.4" height="1.2" fill="#333"/><rect x="2.2" y="0" width="7.4" height="1.2" fill="#333"/><rect x="0" y="2.1" width="1.4" height="1.2" fill="#333"/><rect x="2.2" y="2.1" width="7.4" height="1.2" fill="#333"/><rect x="0" y="4.2" width="1.4" height="1.2" fill="#333"/><rect x="2.2" y="4.2" width="7.4" height="1.2" fill="#333"/><rect x="0" y="6.3" width="1.4" height="1.2" fill="#333"/><rect x="2.2" y="6.3" width="7.4" height="1.2" fill="#333"/></svg>
<div class="b " style="left:79.00px;top:218.90px;width:436.50px;height:33.90px;background:#fff;border:1px solid #dedede;border-radius:3px;"></div>
<svg class="b" style="left:81.00px;top:226.00px;" width="17" height="16" viewBox="0 0 17 16"><rect x="0" y="0" width="4.6" height="15.5" fill="#111"/><rect x="6" y="0" width="5" height="4.5" fill="#8a8a8a"/><rect x="12" y="0" width="5" height="4.5" fill="#8a8a8a"/><rect x="6" y="5.5" width="5" height="4.5" fill="#8a8a8a"/><rect x="12" y="5.5" width="5" height="4.5" fill="#8a8a8a"/><rect x="6" y="11" width="5" height="4.5" fill="#8a8a8a"/><rect x="12" y="11" width="5" height="4.5" fill="#8a8a8a"/></svg>
<div class="b " style="left:102.50px;top:222.50px;width:169.50px;height:23.50px;background:#f0efee;border:1px solid #e2e1e0;border-radius:3px;"></div>
<svg class="b" style="left:106.30px;top:229.40px;" width="9.4" height="9.4" viewBox="0 0 9 9"><path d="M4.5 1.4 V7.6 M1.4 4.5 H7.6" stroke="#222" stroke-width="1.5"/><path d="M4.5 0 L6.1 1.9 H2.9 Z M4.5 9 L6.1 7.1 H2.9 Z M0 4.5 L1.9 2.9 V6.1 Z M9 4.5 L7.1 2.9 V6.1 Z" fill="#222"/></svg>
<div class="b " style="left:121.70px;top:226.80px;width:128.80px;height:15.40px;background:#f3f2f1;border:1px solid #dddcdb;border-radius:3px;"></div>
<span class="t" style="left:125.00px;top:227px;font-size:9.8px;color:#4e4e4e;transform:scaleX(0.9839);">Account : Net Income (48)</span>
<svg class="b" style="left:242.70px;top:232.90px;" width="5.6" height="3.2" viewBox="0 0 5.6 3.2"><path d="M0 0 H5.6 L2.8 3.2 Z" fill="#222"/></svg>
<div class="b " style="left:251.50px;top:226.80px;width:16.50px;height:15.40px;background:#f3f2f1;border:1px solid #dddcdb;border-radius:3px;"></div>
<svg class="b" style="left:254.95px;top:230.70px;" width="9.6" height="7.6" viewBox="0 0 9.6 7.6"><rect x="0" y="0" width="1.4" height="1.2" fill="#333"/><rect x="2.2" y="0" width="7.4" height="1.2" fill="#333"/><rect x="0" y="2.1" width="1.4" height="1.2" fill="#333"/><rect x="2.2" y="2.1" width="7.4" height="1.2" fill="#333"/><rect x="0" y="4.2" width="1.4" height="1.2" fill="#333"/><rect x="2.2" y="4.2" width="7.4" height="1.2" fill="#333"/><rect x="0" y="6.3" width="1.4" height="1.2" fill="#333"/><rect x="2.2" y="6.3" width="7.4" height="1.2" fill="#333"/></svg>
<div class="b " style="left:528.20px;top:218.90px;width:449.80px;height:33.90px;background:#fff;border:1px solid #dedede;border-radius:3px;"></div>
<svg class="b" style="left:532.00px;top:226.50px;" width="17" height="17" viewBox="0 0 17 17"><rect x="0" y="0" width="17" height="3.8" fill="#111"/><rect x="0" y="5.3" width="5" height="4" fill="#8a8a8a"/><rect x="6" y="5.3" width="5" height="4" fill="#8a8a8a"/><rect x="12" y="5.3" width="5" height="4" fill="#8a8a8a"/><rect x="0" y="10.1" width="5" height="4" fill="#8a8a8a"/><rect x="6" y="10.1" width="5" height="4" fill="#8a8a8a"/><rect x="12" y="10.1" width="5" height="4" fill="#8a8a8a"/></svg>
<div class="b " style="left:552.50px;top:222.50px;width:143.20px;height:23.50px;background:#f0efee;border:1px solid #e2e1e0;border-radius:3px;"></div>
<svg class="b" style="left:556.80px;top:229.40px;" width="9.4" height="9.4" viewBox="0 0 9 9"><path d="M4.5 1.4 V7.6 M1.4 4.5 H7.6" stroke="#222" stroke-width="1.5"/><path d="M4.5 0 L6.1 1.9 H2.9 Z M4.5 9 L6.1 7.1 H2.9 Z M0 4.5 L1.9 2.9 V6.1 Z M9 4.5 L7.1 2.9 V6.1 Z" fill="#222"/></svg>
<div class="b " style="left:572.50px;top:226.80px;width:102.00px;height:15.40px;background:#f3f2f1;border:1px solid #dddcdb;border-radius:3px;"></div>
<span class="t" style="left:575.70px;top:227px;font-size:9.8px;color:#4e4e4e;transform:scaleX(0.9693);">Period : Default (13)</span>
<svg class="b" style="left:666.20px;top:232.90px;" width="5.6" height="3.2" viewBox="0 0 5.6 3.2"><path d="M0 0 H5.6 L2.8 3.2 Z" fill="#222"/></svg>
<div class="b " style="left:675.00px;top:226.80px;width:16.50px;height:15.40px;background:#f3f2f1;border:1px solid #dddcdb;border-radius:3px;"></div>
<svg class="b" style="left:678.45px;top:230.70px;" width="9.6" height="7.6" viewBox="0 0 9.6 7.6"><rect x="0" y="0" width="1.4" height="1.2" fill="#333"/><rect x="2.2" y="0" width="7.4" height="1.2" fill="#333"/><rect x="0" y="2.1" width="1.4" height="1.2" fill="#333"/><rect x="2.2" y="2.1" width="7.4" height="1.2" fill="#333"/><rect x="0" y="4.2" width="1.4" height="1.2" fill="#333"/><rect x="2.2" y="4.2" width="7.4" height="1.2" fill="#333"/><rect x="0" y="6.3" width="1.4" height="1.2" fill="#333"/><rect x="2.2" y="6.3" width="7.4" height="1.2" fill="#333"/></svg>
<div class="b " style="left:698.20px;top:222.50px;width:148.50px;height:23.50px;background:#f0efee;border:1px solid #e2e1e0;border-radius:3px;"></div>
<svg class="b" style="left:702.30px;top:229.40px;" width="9.4" height="9.4" viewBox="0 0 9 9"><path d="M4.5 1.4 V7.6 M1.4 4.5 H7.6" stroke="#222" stroke-width="1.5"/><path d="M4.5 0 L6.1 1.9 H2.9 Z M4.5 9 L6.1 7.1 H2.9 Z M0 4.5 L1.9 2.9 V6.1 Z M9 4.5 L7.1 2.9 V6.1 Z" fill="#222"/></svg>
<div class="b " style="left:717.50px;top:226.80px;width:108.50px;height:15.40px;background:#f3f2f1;border:1px solid #dddcdb;border-radius:3px;"></div>
<span class="t" style="left:721.00px;top:227px;font-size:9.8px;color:#4e4e4e;transform:scaleX(0.9407);">Version : {Expression}</span>
<svg class="b" style="left:817.20px;top:232.90px;" width="5.6" height="3.2" viewBox="0 0 5.6 3.2"><path d="M0 0 H5.6 L2.8 3.2 Z" fill="#222"/></svg>
<div class="b " style="left:826.50px;top:226.80px;width:16.00px;height:15.40px;background:#f3f2f1;border:1px solid #dddcdb;border-radius:3px;"></div>
<svg class="b" style="left:829.70px;top:230.70px;" width="9.6" height="7.6" viewBox="0 0 9.6 7.6"><rect x="0" y="0" width="1.4" height="1.2" fill="#333"/><rect x="2.2" y="0" width="7.4" height="1.2" fill="#333"/><rect x="0" y="2.1" width="1.4" height="1.2" fill="#333"/><rect x="2.2" y="2.1" width="7.4" height="1.2" fill="#333"/><rect x="0" y="4.2" width="1.4" height="1.2" fill="#333"/><rect x="2.2" y="4.2" width="7.4" height="1.2" fill="#333"/><rect x="0" y="6.3" width="1.4" height="1.2" fill="#333"/><rect x="2.2" y="6.3" width="7.4" height="1.2" fill="#333"/></svg>
<div class="b" style="left:78px;top:258px;width:887px;height:247.71px;overflow:hidden;">
<div class="b " style="left:0.00px;top:0.30px;width:887.00px;height:246.71px;background:#fff;"></div>
<div class="b " style="left:0.00px;top:0.30px;width:887.00px;height:41.70px;background:#0099cc;"></div>
<div class="b " style="left:537.75px;top:21.30px;width:58.75px;height:20.70px;background:#006f95;"></div>
<span class="t" style="left:108.88px;top:22px;font-size:10.5px;color:#fff;transform:scaleX(0.9550);">Account</span>
<svg class="b" style="left:229.59px;top:6.90px;" width="9" height="9" viewBox="0 0 9 9"><g opacity="0.85"><rect x="0.5" y="0.5" width="8" height="8" rx="1.6" fill="none" stroke="#fff" stroke-width="1"/><path d="M0.8 4.5 H8.2" stroke="#fff" stroke-width="1"/></g></svg>
<span class="t" style="left:243.59px;top:2px;font-size:10.5px;color:#fff;transform:scaleX(0.9550);">Year</span>
<span class="t" style="left:231.94px;top:22px;font-size:10.5px;color:#fff;transform:scaleX(0.9550);">Actual</span>
<svg class="b" style="left:297.21px;top:6.90px;" width="9" height="9" viewBox="0 0 9 9"><g opacity="0.85"><rect x="0.5" y="0.5" width="8" height="8" rx="1.6" fill="none" stroke="#fff" stroke-width="1"/><path d="M0.8 4.5 H8.2" stroke="#fff" stroke-width="1"/></g></svg>
<span class="t" style="left:311.21px;top:2px;font-size:10.5px;color:#fff;transform:scaleX(0.9550);">Year</span>
<span class="t" style="left:297.61px;top:22px;font-size:10.5px;color:#fff;transform:scaleX(0.9550);">Budget</span>
<span class="t" style="left:370.42px;top:2px;font-size:10.5px;color:#fff;transform:scaleX(0.9550);">Jan</span>
<span class="t" style="left:364.57px;top:22px;font-size:10.5px;color:#fff;transform:scaleX(0.9550);">Actual</span>
<span class="t" style="left:435.42px;top:2px;font-size:10.5px;color:#fff;transform:scaleX(0.9550);">Jan</span>
<span class="t" style="left:427.61px;top:22px;font-size:10.5px;color:#fff;transform:scaleX(0.9550);">Budget</span>
<span class="t" style="left:499.99px;top:2px;font-size:10.5px;color:#fff;transform:scaleX(0.9550);">Feb</span>
<span class="t" style="left:494.69px;top:22px;font-size:10.5px;color:#fff;transform:scaleX(0.9550);">Actual</span>
<span class="t" style="left:558.49px;top:2px;font-size:10.5px;color:#fff;transform:scaleX(0.9550);">Mar</span>
<span class="t" style="left:551.37px;top:22px;font-size:10.8px;color:#fff;font-weight:700;transform:scaleX(0.9550);">Actual</span>
<span class="t" style="left:617.70px;top:2px;font-size:10.5px;color:#fff;transform:scaleX(0.9550);">Apr</span>
<span class="t" style="left:611.57px;top:22px;font-size:10.5px;color:#fff;transform:scaleX(0.9550);">Actual</span>
<span class="t" style="left:674.03px;top:2px;font-size:10.5px;color:#fff;transform:scaleX(0.9550);">May</span>
<span class="t" style="left:669.57px;top:22px;font-size:10.5px;color:#fff;transform:scaleX(0.9550);">Actual</span>
<span class="t" style="left:723.03px;top:2px;font-size:10.5px;color:#fff;transform:scaleX(0.9550);">May</span>
<span class="t" style="left:716.61px;top:22px;font-size:10.5px;color:#fff;transform:scaleX(0.9550);">Budget</span>
<span class="t" style="left:773.42px;top:2px;font-size:10.5px;color:#fff;transform:scaleX(0.9550);">Jun</span>
<span class="t" style="left:767.57px;top:22px;font-size:10.5px;color:#fff;transform:scaleX(0.9550);">Actual</span>
<span class="t" style="left:833.09px;top:2px;font-size:10.5px;color:#fff;transform:scaleX(0.9550);">Jul</span>
<span class="t" style="left:825.57px;top:22px;font-size:10.5px;color:#fff;transform:scaleX(0.9550);">Actual</span>
<span class="t" style="left:888.58px;top:2px;font-size:10.5px;color:#fff;transform:scaleX(0.9550);">Aug</span>
<span class="t" style="left:883.57px;top:22px;font-size:10.5px;color:#fff;transform:scaleX(0.9550);">Actual</span>
<div class="b " style="left:0.00px;top:41.75px;width:39.50px;height:205.26px;background:#e01fa2;"></div>
<div class="b " style="left:0.00px;top:79.07px;width:39.50px;height:18.66px;background:#98126d;"></div>
<span class="t" style="left:16.75px;top:42px;font-size:10.8px;color:#fff;transform:scaleX(0.9500);">1</span>
<span class="t" style="left:16.75px;top:61px;font-size:10.8px;color:#fff;transform:scaleX(0.9500);">2</span>
<span class="t" style="left:16.75px;top:79px;font-size:10.8px;color:#fff;font-weight:700;transform:scaleX(0.9500);">3</span>
<span class="t" style="left:16.75px;top:98px;font-size:10.8px;color:#fff;transform:scaleX(0.9500);">4</span>
<span class="t" style="left:16.75px;top:117px;font-size:10.8px;color:#fff;transform:scaleX(0.9500);">5</span>
<span class="t" style="left:16.75px;top:135px;font-size:10.8px;color:#fff;transform:scaleX(0.9500);">6</span>
<span class="t" style="left:16.75px;top:154px;font-size:10.8px;color:#fff;transform:scaleX(0.9500);">7</span>
<span class="t" style="left:16.75px;top:173px;font-size:10.8px;color:#fff;transform:scaleX(0.9500);">8</span>
<span class="t" style="left:16.75px;top:191px;font-size:10.8px;color:#fff;transform:scaleX(0.9500);">9</span>
<span class="t" style="left:13.89px;top:210px;font-size:10.8px;color:#fff;transform:scaleX(0.9500);">10</span>
<span class="t" style="left:13.89px;top:229px;font-size:10.8px;color:#fff;transform:scaleX(0.9500);">11</span>
<svg class="b" style="left:46.00px;top:47.78px;" width="9" height="9" viewBox="0 0 9 9"><g opacity="0.85"><rect x="0.5" y="0.5" width="8" height="8" rx="1.6" fill="none" stroke="#e01fa2" stroke-width="1"/><path d="M0.8 4.5 H8.2" stroke="#e01fa2" stroke-width="1"/></g></svg>
<span class="t" style="left:61.00px;top:42px;font-size:10.8px;color:#e01fa2;font-weight:700;transform:scaleX(1.0393);">Net Income</span>
<svg class="b" style="left:54.00px;top:66.44px;" width="9" height="9" viewBox="0 0 9 9"><g opacity="0.85"><rect x="0.5" y="0.5" width="8" height="8" rx="1.6" fill="none" stroke="#e01fa2" stroke-width="1"/><path d="M0.8 4.5 H8.2" stroke="#e01fa2" stroke-width="1"/></g></svg>
<span class="t" style="left:68.70px;top:61px;font-size:10.8px;color:#e01fa2;font-weight:700;transform:scaleX(1.0438);">Operating Profit</span>
<svg class="b" style="left:62.00px;top:85.10px;" width="9" height="9" viewBox="0 0 9 9"><g opacity="0.85"><rect x="0.5" y="0.5" width="8" height="8" rx="1.6" fill="none" stroke="#e01fa2" stroke-width="1"/><path d="M0.8 4.5 H8.2" stroke="#e01fa2" stroke-width="1"/></g></svg>
<span class="t" style="left:77.00px;top:80px;font-size:10.8px;color:#e01fa2;font-weight:700;transform:scaleX(0.9941);">Gross Margin</span>
<svg class="b" style="left:70.00px;top:103.76px;" width="9" height="9" viewBox="0 0 9 9"><g opacity="0.85"><rect x="0.5" y="0.5" width="8" height="8" rx="1.6" fill="none" stroke="#e01fa2" stroke-width="1"/><path d="M0.8 4.5 H8.2" stroke="#e01fa2" stroke-width="1"/></g></svg>
<span class="t" style="left:85.00px;top:98px;font-size:10.8px;color:#e01fa2;font-weight:700;transform:scaleX(0.9913);">Net Sales</span>
<svg class="b" style="left:78.00px;top:122.42px;" width="9" height="9" viewBox="0 0 9 9"><g opacity="0.85"><rect x="0.5" y="0.5" width="8" height="8" rx="1.6" fill="none" stroke="#e01fa2" stroke-width="1"/><path d="M0.8 4.5 H8.2" stroke="#e01fa2" stroke-width="1"/></g></svg>
<span class="t" style="left:92.70px;top:117px;font-size:10.8px;color:#e01fa2;font-weight:700;transform:scaleX(0.9338);">Gross Sales</span>
<span class="t" style="left:91.70px;top:136px;font-size:10.6px;color:#e540b0;transform:scaleX(0.9779);">Retail</span>
<svg class="b" style="left:62.00px;top:159.74px;" width="9" height="9" viewBox="0 0 9 9"><g opacity="0.85"><rect x="0.5" y="0.5" width="8" height="8" rx="1.6" fill="none" stroke="#e01fa2" stroke-width="1"/><path d="M0.8 4.5 H8.2" stroke="#e01fa2" stroke-width="1"/></g></svg>
<span class="t" style="left:77.00px;top:154px;font-size:10.8px;color:#e01fa2;font-weight:700;transform:scaleX(0.9911);">Operating Expenses</span>
<svg class="b" style="left:70.00px;top:178.40px;" width="9" height="9" viewBox="0 0 9 9"><g opacity="0.85"><rect x="0.5" y="0.5" width="8" height="8" rx="1.6" fill="none" stroke="#e01fa2" stroke-width="1"/><path d="M0.8 4.5 H8.2" stroke="#e01fa2" stroke-width="1"/></g></svg>
<span class="t" style="left:85.00px;top:173px;font-size:10.8px;color:#e01fa2;font-weight:700;transform:scaleX(0.9613);">Labor Expenses</span>
<span class="t" style="left:83.70px;top:192px;font-size:10.6px;color:#e540b0;transform:scaleX(1.0127);">Employee Benefits</span>
<svg class="b" style="left:70.00px;top:215.72px;" width="9" height="9" viewBox="0 0 9 9"><g opacity="0.85"><rect x="0.5" y="0.5" width="8" height="8" rx="1.6" fill="none" stroke="#e01fa2" stroke-width="1"/><path d="M0.8 4.5 H8.2" stroke="#e01fa2" stroke-width="1"/></g></svg>
<span class="t" style="left:85.00px;top:210px;font-size:10.8px;color:#e01fa2;font-weight:700;transform:scaleX(0.9561);">Travel Expenses</span>
<span class="t" style="left:83.70px;top:229px;font-size:10.6px;color:#e540b0;transform:scaleX(1.0156);">Travel Transportation</span>
<div class="b " style="left:214.25px;top:41.75px;width:672.75px;height:205.26px;background:#efeeed;"></div>
<div class="b " style="left:349.50px;top:191.03px;width:537.50px;height:18.66px;background:#ffffff;"></div>
<div class="b " style="left:349.50px;top:228.35px;width:537.50px;height:18.66px;background:#ffffff;"></div>
<div class="b " style="left:214.25px;top:42.00px;width:672.75px;height:1.00px;background:#e0dfde;"></div>
<div class="b " style="left:214.25px;top:60.00px;width:672.75px;height:1.00px;background:#d3d2d1;"></div>
<div class="b " style="left:214.25px;top:79.00px;width:672.75px;height:1.00px;background:#d3d2d1;"></div>
<div class="b " style="left:214.25px;top:97.00px;width:672.75px;height:1.00px;background:#d3d2d1;"></div>
<div class="b " style="left:214.25px;top:116.00px;width:672.75px;height:1.00px;background:#d3d2d1;"></div>
<div class="b " style="left:214.25px;top:135.00px;width:672.75px;height:1.00px;background:#d3d2d1;"></div>
<div class="b " style="left:214.25px;top:153.00px;width:672.75px;height:1.00px;background:#d3d2d1;"></div>
<div class="b " style="left:214.25px;top:172.00px;width:672.75px;height:1.00px;background:#d3d2d1;"></div>
<div class="b " style="left:214.25px;top:191.00px;width:672.75px;height:1.00px;background:#d3d2d1;"></div>
<div class="b " style="left:214.25px;top:209.00px;width:672.75px;height:1.00px;background:#d3d2d1;"></div>
<div class="b " style="left:214.25px;top:228.00px;width:672.75px;height:1.00px;background:#d3d2d1;"></div>
<div class="b " style="left:214.25px;top:247.00px;width:672.75px;height:1.00px;background:#d3d2d1;"></div>
<div class="b " style="left:214.00px;top:41.75px;width:1.00px;height:205.26px;background:#d3d2d1;"></div>
<div class="b " style="left:277.00px;top:41.75px;width:1.00px;height:205.26px;background:#d3d2d1;"></div>
<div class="b " style="left:349.00px;top:41.75px;width:1.00px;height:205.26px;background:#d3d2d1;"></div>
<div class="b " style="left:407.00px;top:41.75px;width:1.00px;height:205.26px;background:#d3d2d1;"></div>
<div class="b " style="left:479.00px;top:41.75px;width:1.00px;height:205.26px;background:#d3d2d1;"></div>
<div class="b " style="left:537.00px;top:41.75px;width:1.00px;height:205.26px;background:#d3d2d1;"></div>
<div class="b " style="left:596.00px;top:41.75px;width:1.00px;height:205.26px;background:#d3d2d1;"></div>
<div class="b " style="left:654.00px;top:41.75px;width:1.00px;height:205.26px;background:#d3d2d1;"></div>
<div class="b " style="left:712.00px;top:41.75px;width:1.00px;height:205.26px;background:#d3d2d1;"></div>
<div class="b " style="left:752.00px;top:41.75px;width:1.00px;height:205.26px;background:#d3d2d1;"></div>
<div class="b " style="left:810.00px;top:41.75px;width:1.00px;height:205.26px;background:#d3d2d1;"></div>
<div class="b " style="left:868.00px;top:41.75px;width:1.00px;height:205.26px;background:#d3d2d1;"></div>
<span class="t" style="left:219.10px;top:42px;font-size:9.7px;color:#505050;">(281,261.74)</span>
<span class="t" style="left:283.01px;top:42px;font-size:9.7px;color:#505050;">(1,111,079.47)</span>
<span class="t" style="left:354.49px;top:42px;font-size:9.7px;color:#505050;">(30,854.00)</span>
<span class="t" style="left:413.01px;top:42px;font-size:9.7px;color:#505050;">(1,111,081.88)</span>
<span class="t" style="left:484.74px;top:42px;font-size:9.7px;color:#505050;">(29,711.00)</span>
<span class="t" style="left:543.49px;top:42px;font-size:9.7px;color:#505050;">(25,786.00)</span>
<span class="t" style="left:601.49px;top:42px;font-size:9.7px;color:#505050;">(23,949.00)</span>
<span class="t" style="left:659.49px;top:42px;font-size:9.7px;color:#505050;">(24,057.00)</span>
<span class="t" style="left:730.22px;top:42px;font-size:9.7px;color:#505050;">2.41</span>
<span class="t" style="left:757.49px;top:42px;font-size:9.7px;color:#505050;">(23,377.01)</span>
<span class="t" style="left:815.49px;top:42px;font-size:9.7px;color:#505050;">(24,531.00)</span>
<span class="t" style="left:873.49px;top:42px;font-size:9.7px;color:#505050;">(17,542.00)</span>
<span class="t" style="left:219.10px;top:61px;font-size:9.7px;color:#505050;">(280,528.74)</span>
<span class="t" style="left:283.01px;top:61px;font-size:9.7px;color:#505050;">(1,111,079.47)</span>
<span class="t" style="left:354.49px;top:61px;font-size:9.7px;color:#505050;">(30,792.00)</span>
<span class="t" style="left:413.01px;top:61px;font-size:9.7px;color:#505050;">(1,111,081.88)</span>
<span class="t" style="left:484.74px;top:61px;font-size:9.7px;color:#505050;">(29,653.00)</span>
<span class="t" style="left:543.49px;top:61px;font-size:9.7px;color:#505050;">(25,729.00)</span>
<span class="t" style="left:601.49px;top:61px;font-size:9.7px;color:#505050;">(23,891.00)</span>
<span class="t" style="left:659.49px;top:61px;font-size:9.7px;color:#505050;">(23,990.00)</span>
<span class="t" style="left:730.22px;top:61px;font-size:9.7px;color:#505050;">2.41</span>
<span class="t" style="left:757.49px;top:61px;font-size:9.7px;color:#505050;">(23,319.01)</span>
<span class="t" style="left:815.49px;top:61px;font-size:9.7px;color:#505050;">(24,470.00)</span>
<span class="t" style="left:873.49px;top:61px;font-size:9.7px;color:#505050;">(17,492.00)</span>
<span class="t" style="left:249.83px;top:80px;font-size:9.7px;color:#505050;">29.26</span>
<span class="t" style="left:321.83px;top:80px;font-size:9.7px;color:#505050;">31.53</span>
<span class="t" style="left:385.22px;top:80px;font-size:9.7px;color:#505050;">0.00</span>
<span class="t" style="left:451.83px;top:80px;font-size:9.7px;color:#505050;">29.12</span>
<span class="t" style="left:515.47px;top:80px;font-size:9.7px;color:#505050;">0.00</span>
<span class="t" style="left:632.22px;top:80px;font-size:9.7px;color:#505050;">0.00</span>
<span class="t" style="left:690.22px;top:80px;font-size:9.7px;color:#505050;">0.00</span>
<span class="t" style="left:730.22px;top:80px;font-size:9.7px;color:#505050;">2.41</span>
<span class="t" style="left:788.22px;top:80px;font-size:9.7px;color:#505050;">4.99</span>
<span class="t" style="left:846.22px;top:80px;font-size:9.7px;color:#505050;">0.00</span>
<span class="t" style="left:904.22px;top:80px;font-size:9.7px;color:#505050;">0.00</span>
<span class="t" style="left:249.83px;top:98px;font-size:9.7px;color:#505050;">29.26</span>
<span class="t" style="left:321.83px;top:98px;font-size:9.7px;color:#505050;">31.53</span>
<span class="t" style="left:385.22px;top:98px;font-size:9.7px;color:#505050;">0.00</span>
<span class="t" style="left:451.83px;top:98px;font-size:9.7px;color:#505050;">29.12</span>
<span class="t" style="left:515.47px;top:98px;font-size:9.7px;color:#505050;">0.00</span>
<span class="t" style="left:574.22px;top:98px;font-size:9.7px;color:#505050;">0.00</span>
<span class="t" style="left:632.22px;top:98px;font-size:9.7px;color:#505050;">0.00</span>
<span class="t" style="left:690.22px;top:98px;font-size:9.7px;color:#505050;">0.00</span>
<span class="t" style="left:730.22px;top:98px;font-size:9.7px;color:#505050;">2.41</span>
<span class="t" style="left:788.22px;top:98px;font-size:9.7px;color:#505050;">4.99</span>
<span class="t" style="left:846.22px;top:98px;font-size:9.7px;color:#505050;">0.00</span>
<span class="t" style="left:904.22px;top:98px;font-size:9.7px;color:#505050;">0.00</span>
<span class="t" style="left:249.83px;top:117px;font-size:9.7px;color:#505050;">29.26</span>
<span class="t" style="left:321.83px;top:117px;font-size:9.7px;color:#505050;">31.53</span>
<span class="t" style="left:385.22px;top:117px;font-size:9.7px;color:#505050;">0.00</span>
<span class="t" style="left:451.83px;top:117px;font-size:9.7px;color:#505050;">29.12</span>
<span class="t" style="left:515.47px;top:117px;font-size:9.7px;color:#505050;">0.00</span>
<span class="t" style="left:574.22px;top:117px;font-size:9.7px;color:#505050;">0.00</span>
<span class="t" style="left:632.22px;top:117px;font-size:9.7px;color:#505050;">0.00</span>
<span class="t" style="left:690.22px;top:117px;font-size:9.7px;color:#505050;">0.00</span>
<span class="t" style="left:730.22px;top:117px;font-size:9.7px;color:#505050;">2.41</span>
<span class="t" style="left:788.22px;top:117px;font-size:9.7px;color:#505050;">4.99</span>
<span class="t" style="left:846.22px;top:117px;font-size:9.7px;color:#505050;">0.00</span>
<span class="t" style="left:904.22px;top:117px;font-size:9.7px;color:#505050;">0.00</span>
<span class="t" style="left:249.83px;top:136px;font-size:9.7px;color:#505050;">29.26</span>
<span class="t" style="left:321.83px;top:136px;font-size:9.7px;color:#505050;">31.53</span>
<span class="t" style="left:385.22px;top:136px;font-size:9.7px;color:#505050;">0.00</span>
<span class="t" style="left:451.83px;top:136px;font-size:9.7px;color:#505050;">29.12</span>
<span class="t" style="left:515.47px;top:136px;font-size:9.7px;color:#505050;">0.00</span>
<span class="t" style="left:574.22px;top:136px;font-size:9.7px;color:#505050;">0.00</span>
<span class="t" style="left:632.22px;top:136px;font-size:9.7px;color:#505050;">0.00</span>
<span class="t" style="left:690.22px;top:136px;font-size:9.7px;color:#505050;">0.00</span>
<span class="t" style="left:730.22px;top:136px;font-size:9.7px;color:#505050;">2.41</span>
<span class="t" style="left:788.22px;top:136px;font-size:9.7px;color:#505050;">4.99</span>
<span class="t" style="left:846.22px;top:136px;font-size:9.7px;color:#505050;">0.00</span>
<span class="t" style="left:904.22px;top:136px;font-size:9.7px;color:#505050;">0.00</span>
<span class="t" style="left:225.56px;top:154px;font-size:9.7px;color:#505050;">280,558.00</span>
<span class="t" style="left:289.47px;top:154px;font-size:9.7px;color:#505050;">1,111,111.00</span>
<span class="t" style="left:360.95px;top:154px;font-size:9.7px;color:#505050;">30,792.00</span>
<span class="t" style="left:419.47px;top:154px;font-size:9.7px;color:#505050;">1,111,111.00</span>
<span class="t" style="left:491.20px;top:154px;font-size:9.7px;color:#505050;">29,653.00</span>
<span class="t" style="left:549.95px;top:154px;font-size:9.7px;color:#505050;">25,729.00</span>
<span class="t" style="left:607.95px;top:154px;font-size:9.7px;color:#505050;">23,891.00</span>
<span class="t" style="left:665.95px;top:154px;font-size:9.7px;color:#505050;">23,990.00</span>
<span class="t" style="left:730.22px;top:154px;font-size:9.7px;color:#505050;">0.00</span>
<span class="t" style="left:763.95px;top:154px;font-size:9.7px;color:#505050;">23,324.00</span>
<span class="t" style="left:821.95px;top:154px;font-size:9.7px;color:#505050;">24,470.00</span>
<span class="t" style="left:879.95px;top:154px;font-size:9.7px;color:#505050;">17,492.00</span>
<span class="t" style="left:230.95px;top:173px;font-size:9.7px;color:#505050;">88,386.00</span>
<span class="t" style="left:327.22px;top:173px;font-size:9.7px;color:#505050;">0.00</span>
<span class="t" style="left:366.35px;top:173px;font-size:9.7px;color:#505050;">8,927.00</span>
<span class="t" style="left:457.22px;top:173px;font-size:9.7px;color:#505050;">0.00</span>
<span class="t" style="left:496.60px;top:173px;font-size:9.7px;color:#505050;">7,620.00</span>
<span class="t" style="left:555.35px;top:173px;font-size:9.7px;color:#505050;">5,154.00</span>
<span class="t" style="left:613.35px;top:173px;font-size:9.7px;color:#505050;">8,025.00</span>
<span class="t" style="left:671.35px;top:173px;font-size:9.7px;color:#505050;">7,854.00</span>
<span class="t" style="left:730.22px;top:173px;font-size:9.7px;color:#505050;">0.00</span>
<span class="t" style="left:769.35px;top:173px;font-size:9.7px;color:#505050;">7,952.00</span>
<span class="t" style="left:827.35px;top:173px;font-size:9.7px;color:#505050;">8,283.00</span>
<span class="t" style="left:885.35px;top:173px;font-size:9.7px;color:#505050;">5,614.00</span>
<span class="t" style="left:230.95px;top:192px;font-size:9.7px;color:#505050;">88,386.00</span>
<span class="t" style="left:327.22px;top:192px;font-size:9.7px;color:#505050;">0.00</span>
<span class="t" style="left:366.35px;top:192px;font-size:9.7px;color:#505050;">8,927.00</span>
<span class="t" style="left:457.22px;top:192px;font-size:9.7px;color:#505050;">0.00</span>
<span class="t" style="left:496.60px;top:192px;font-size:9.7px;color:#505050;">7,620.00</span>
<span class="t" style="left:555.35px;top:192px;font-size:9.7px;color:#505050;">5,154.00</span>
<span class="t" style="left:613.35px;top:192px;font-size:9.7px;color:#505050;">8,025.00</span>
<span class="t" style="left:671.35px;top:192px;font-size:9.7px;color:#505050;">7,854.00</span>
<span class="t" style="left:730.22px;top:192px;font-size:9.7px;color:#505050;">0.00</span>
<span class="t" style="left:769.35px;top:192px;font-size:9.7px;color:#505050;">7,952.00</span>
<span class="t" style="left:827.35px;top:192px;font-size:9.7px;color:#505050;">8,283.00</span>
<span class="t" style="left:885.35px;top:192px;font-size:9.7px;color:#505050;">5,614.00</span>
<span class="t" style="left:230.95px;top:210px;font-size:9.7px;color:#505050;">86,004.00</span>
<span class="t" style="left:289.47px;top:210px;font-size:9.7px;color:#505050;">1,111,111.00</span>
<span class="t" style="left:360.95px;top:210px;font-size:9.7px;color:#505050;">12,900.00</span>
<span class="t" style="left:419.47px;top:210px;font-size:9.7px;color:#505050;">1,111,111.00</span>
<span class="t" style="left:491.20px;top:210px;font-size:9.7px;color:#505050;">12,900.00</span>
<span class="t" style="left:549.95px;top:210px;font-size:9.7px;color:#505050;">12,900.00</span>
<span class="t" style="left:613.35px;top:210px;font-size:9.7px;color:#505050;">7,194.00</span>
<span class="t" style="left:671.35px;top:210px;font-size:9.7px;color:#505050;">7,194.00</span>
<span class="t" style="left:730.22px;top:210px;font-size:9.7px;color:#505050;">0.00</span>
<span class="t" style="left:769.35px;top:210px;font-size:9.7px;color:#505050;">6,322.00</span>
<span class="t" style="left:827.35px;top:210px;font-size:9.7px;color:#505050;">7,194.00</span>
<span class="t" style="left:885.35px;top:210px;font-size:9.7px;color:#505050;">4,300.00</span>
<span class="t" style="left:230.95px;top:229px;font-size:9.7px;color:#505050;">24,617.00</span>
<span class="t" style="left:327.22px;top:229px;font-size:9.7px;color:#505050;">0.00</span>
<span class="t" style="left:366.35px;top:229px;font-size:9.7px;color:#505050;">2,580.00</span>
<span class="t" style="left:457.22px;top:229px;font-size:9.7px;color:#505050;">0.00</span>
<span class="t" style="left:496.60px;top:229px;font-size:9.7px;color:#505050;">2,580.00</span>
<span class="t" style="left:555.35px;top:229px;font-size:9.7px;color:#505050;">2,580.00</span>
<span class="t" style="left:613.35px;top:229px;font-size:9.7px;color:#505050;">2,580.00</span>
<span class="t" style="left:671.35px;top:229px;font-size:9.7px;color:#505050;">2,580.00</span>
<span class="t" style="left:730.22px;top:229px;font-size:9.7px;color:#505050;">0.00</span>
<span class="t" style="left:769.35px;top:229px;font-size:9.7px;color:#505050;">2,250.00</span>
<span class="t" style="left:827.35px;top:229px;font-size:9.7px;color:#505050;">2,580.00</span>
<span class="t" style="left:885.35px;top:229px;font-size:9.7px;color:#505050;">1,290.00</span>
<div class="b " style="left:538.20px;top:79.07px;width:58.40px;height:18.86px;background:#f4f3f2;border:1.2px solid #4a8fe0;"></div>
<span class="t" style="left:574.22px;top:80px;font-size:9.7px;color:#3b9bd0;">0.00</span>
<div class="b " style="left:593.60px;top:95.13px;width:5.00px;height:5.00px;background:#4a8fe0;border:0.7px solid #fff;"></div>
<svg class="b" style="left:272.60px;top:60.81px;" width="4.4" height="4.4" viewBox="0 0 4.4 4.4"><path d="M0 0 H4.4 V4.4 Z" fill="#e0208c"/></svg>
</div>
<div class="b " style="left:965.00px;top:258.30px;width:13.70px;height:247.31px;background:#f1f1f1;"></div>
<svg class="b" style="left:968.50px;top:264.00px;" width="6" height="4" viewBox="0 0 6 4"><path d="M0 4 L3 0 L6 4 Z" fill="#a3a3a3"/></svg>
<div class="b " style="left:966.50px;top:272.00px;width:11.50px;height:75.00px;background:#c1c1c1;"></div>
<svg class="b" style="left:968.50px;top:496.50px;" width="6" height="4" viewBox="0 0 6 4"><path d="M0 0 L3 4 L6 0 Z" fill="#505050"/></svg>
<div class="b " style="left:78.00px;top:505.61px;width:887.40px;height:13.09px;background:#f1f1f1;"></div>
<svg class="b" style="left:82.00px;top:508.50px;" width="4" height="6" viewBox="0 0 4 6"><path d="M4 0 L0 3 L4 6 Z" fill="#a3a3a3"/></svg>
<div class="b " style="left:91.20px;top:506.80px;width:656.30px;height:10.90px;background:#c1c1c1;"></div>
<svg class="b" style="left:957.00px;top:508.80px;" width="4" height="6" viewBox="0 0 4 6"><path d="M0 0 L4 3 L0 6 Z" fill="#505050"/></svg>
<div class="b " style="left:965.40px;top:505.61px;width:13.30px;height:13.09px;background:#dcdcdc;"></div>
<svg class="b" style="left:676.80px;top:118.60px;" width="13.4" height="17.2" viewBox="0 0 15 18"><path d="M4.6 9.2 V2.2 a1.3 1.3 0 0 1 2.6 0 V6.6 l0.4 0 V5.6 a1.2 1.2 0 0 1 2.4 0 V7 l0.4 0 V6.4 a1.2 1.2 0 0 1 2.3 0 V7.6 l0.3 0 a1.1 1.1 0 0 1 1.6 0.8 V12 c0 2 -0.8 3.2 -1.2 5 H6.6 C5.6 15 3.4 13 1.4 11.2 C0.4 10.2 1.6 8.8 2.8 9.6 L4.6 11 Z" fill="#fff" stroke="#222" stroke-width="0.9" stroke-linejoin="round"/><path d="M7.4 12 V15 M9.6 12 V15 M11.8 12 V15" stroke="#222" stroke-width="0.7"/></svg>
</div></body></html>
